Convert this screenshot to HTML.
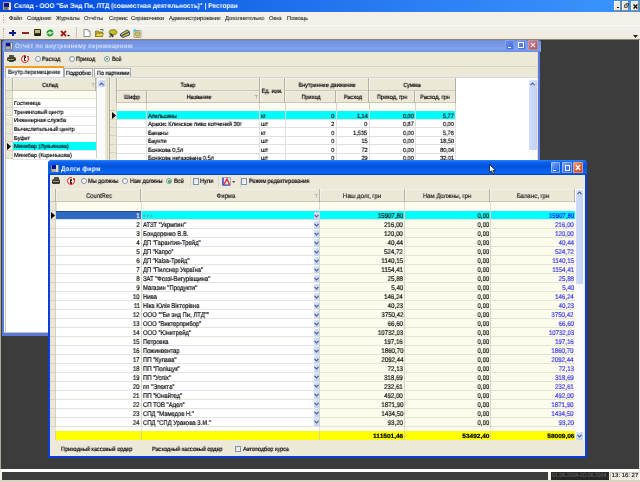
<!DOCTYPE html>
<html><head><meta charset="utf-8"><style>
html,body{margin:0;padding:0;width:640px;height:482px;overflow:hidden;background:#ece9d8}
body{position:relative;font-family:"Liberation Sans",sans-serif}
#w{position:absolute;left:0;top:0;width:640px;height:482px;overflow:hidden}
#w>div{position:absolute}
.t{will-change:transform;text-rendering:geometricPrecision;-webkit-text-stroke:0.18px currentColor}
.t{white-space:nowrap}
</style></head><body><div id="w">
<div style="left:0.00px;top:0.00px;width:640.00px;height:482.00px;background:#ECE9D8"></div>
<div style="left:1.00px;top:39.50px;width:638.00px;height:429.90px;background:#3c3c3c"></div>
<div style="left:0.00px;top:39.50px;width:1.30px;height:442.50px;background:#aca89a"></div>
<div style="left:638.80px;top:39.50px;width:1.20px;height:442.50px;background:#dcdcd8"></div>
<div style="left:0.00px;top:0.00px;width:640.00px;height:12.00px;background:linear-gradient(90deg,#0448dc 0%,#0a58e6 20%,#1a6cea 40%,#2a7ef2 64%,#3890fa 92%,#3a94fc 100%)"></div>
<div style="left:3.00px;top:2.20px;width:8.00px;height:8.20px;background:#b0a890;border-radius:0.5px"></div>
<div style="left:3.80px;top:3.00px;width:4.80px;height:3.80px;background:#0a1090"></div>
<div style="left:8.80px;top:3.00px;width:1.80px;height:7.00px;background:#e8e0c8"></div>
<div style="left:4.20px;top:7.40px;width:4.00px;height:2.60px;background:#807868"></div>
<div style="left:5.60px;top:8.00px;width:1.80px;height:1.20px;background:#2040c0"></div>
<div class="t" style="left:13.50px;top:0.26px;line-height:13.68px;font-size:6.84px;color:#fff;font-weight:bold;-webkit-text-stroke:0;transform:scaleX(0.946);transform-origin:0 50%;">Склад - ООО "Би Энд Пи, ЛТД (совместная деятельность)" | Ресторан</div>
<div style="left:614.00px;top:1.00px;width:7.30px;height:9.80px;background:#ECE9D8;box-shadow:inset -0.8px -0.8px #706c60, inset 0.8px 0.8px #fff"></div>
<div style="left:621.50px;top:1.00px;width:7.90px;height:9.80px;background:#ECE9D8;box-shadow:inset -0.8px -0.8px #706c60, inset 0.8px 0.8px #fff"></div>
<div style="left:631.00px;top:1.00px;width:7.60px;height:9.80px;background:#ECE9D8;box-shadow:inset -0.8px -0.8px #706c60, inset 0.8px 0.8px #fff"></div>
<div style="left:616.80px;top:7.00px;width:2.60px;height:1.40px;background:#181818"></div>
<svg style="position:absolute;left:623.5px;top:3.2px" width="5" height="5" viewBox="0 0 5 5"><path d="M1.8 0.6 L4.4 0.6 L4.4 3 M0.6 1.8 L3.2 1.8 L3.2 4.4 L0.6 4.4Z" fill="none" stroke="#282828" stroke-width="0.8"/></svg>
<svg style="position:absolute;left:632.6px;top:3.6px" width="5" height="5" viewBox="0 0 5 5"><path d="M0.6 0.6 L4.4 4.4 M4.4 0.6 L0.6 4.4" stroke="#101010" stroke-width="1.4"/></svg>
<div style="left:0.00px;top:12.00px;width:640.00px;height:13.00px;background:#f2f0e8"></div>
<div style="left:3.00px;top:15.00px;width:1.00px;height:0.80px;background:#b8b4a4"></div>
<div style="left:3.00px;top:16.80px;width:1.00px;height:0.80px;background:#b8b4a4"></div>
<div style="left:3.00px;top:18.60px;width:1.00px;height:0.80px;background:#b8b4a4"></div>
<div style="left:3.00px;top:20.40px;width:1.00px;height:0.80px;background:#b8b4a4"></div>
<div style="left:3.00px;top:22.20px;width:1.00px;height:0.80px;background:#b8b4a4"></div>
<div class="t" style="left:9.00px;top:14.29px;line-height:11.62px;font-size:5.81px;color:#101010;transform:scaleX(0.938);transform-origin:0 50%;-webkit-text-stroke:0.08px #101010">Файл</div>
<div class="t" style="left:26.50px;top:14.29px;line-height:11.62px;font-size:5.81px;color:#101010;transform:scaleX(0.938);transform-origin:0 50%;-webkit-text-stroke:0.08px #101010">Создание</div>
<div class="t" style="left:55.50px;top:14.29px;line-height:11.62px;font-size:5.81px;color:#101010;transform:scaleX(0.938);transform-origin:0 50%;-webkit-text-stroke:0.08px #101010">Журналы</div>
<div class="t" style="left:84.00px;top:14.29px;line-height:11.62px;font-size:5.81px;color:#101010;transform:scaleX(0.938);transform-origin:0 50%;-webkit-text-stroke:0.08px #101010">Отчёты</div>
<div class="t" style="left:108.60px;top:14.29px;line-height:11.62px;font-size:5.81px;color:#101010;transform:scaleX(0.938);transform-origin:0 50%;-webkit-text-stroke:0.08px #101010">Сервис</div>
<div class="t" style="left:131.00px;top:14.29px;line-height:11.62px;font-size:5.81px;color:#101010;transform:scaleX(0.938);transform-origin:0 50%;-webkit-text-stroke:0.08px #101010">Справочники</div>
<div class="t" style="left:168.70px;top:14.29px;line-height:11.62px;font-size:5.81px;color:#101010;transform:scaleX(0.938);transform-origin:0 50%;-webkit-text-stroke:0.08px #101010">Администрирование</div>
<div class="t" style="left:224.70px;top:14.29px;line-height:11.62px;font-size:5.81px;color:#101010;transform:scaleX(0.938);transform-origin:0 50%;-webkit-text-stroke:0.08px #101010">Дополнительно</div>
<div class="t" style="left:269.40px;top:14.29px;line-height:11.62px;font-size:5.81px;color:#101010;transform:scaleX(0.938);transform-origin:0 50%;-webkit-text-stroke:0.08px #101010">Окна</div>
<div class="t" style="left:286.60px;top:14.29px;line-height:11.62px;font-size:5.81px;color:#101010;transform:scaleX(0.938);transform-origin:0 50%;-webkit-text-stroke:0.08px #101010">Помощь</div>
<div style="left:0.00px;top:25.00px;width:640.00px;height:14.50px;background:linear-gradient(#f4f3ec,#ece9dc)"></div>
<div style="left:0.00px;top:25.00px;width:640.00px;height:0.80px;background:#faf9f4"></div>
<div style="left:3.00px;top:27.50px;width:1.00px;height:0.80px;background:#b8b4a4"></div>
<div style="left:3.00px;top:29.30px;width:1.00px;height:0.80px;background:#b8b4a4"></div>
<div style="left:3.00px;top:31.10px;width:1.00px;height:0.80px;background:#b8b4a4"></div>
<div style="left:3.00px;top:32.90px;width:1.00px;height:0.80px;background:#b8b4a4"></div>
<div style="left:3.00px;top:34.70px;width:1.00px;height:0.80px;background:#b8b4a4"></div>
<div style="left:3.00px;top:36.50px;width:1.00px;height:0.80px;background:#b8b4a4"></div>
<div style="left:76.00px;top:27.00px;width:0.80px;height:11.00px;background:#c8c4b4"></div>
<div style="left:0.00px;top:38.90px;width:640.00px;height:0.90px;background:#8a8470"></div>
<div style="left:9.40px;top:32.10px;width:6.40px;height:2.20px;background:#101c88"></div>
<div style="left:11.50px;top:29.90px;width:2.20px;height:6.50px;background:#101c88"></div>
<div style="left:21.70px;top:32.00px;width:7.00px;height:2.20px;background:#982020"></div>
<div style="left:34.00px;top:29.40px;width:7.00px;height:7.00px;background:#3a3a14;border-radius:0.8px"></div>
<div style="left:35.40px;top:29.80px;width:4.20px;height:2.80px;background:#b8b888"></div>
<div style="left:35.20px;top:33.60px;width:4.60px;height:2.60px;background:#202008"></div>
<div style="left:40.20px;top:30.60px;width:0.80px;height:4.80px;background:#202008"></div>
<svg style="position:absolute;left:46.4px;top:29.2px" width="8" height="8" viewBox="0 0 8 8"><path d="M1.2 3.8 A2.8 2.8 0 0 1 6.2 2.6" stroke="#18a028" stroke-width="1.7" fill="none"/><path d="M6.8 4.2 A2.8 2.8 0 0 1 1.8 5.4" stroke="#18a028" stroke-width="1.7" fill="none"/><path d="M5 0.6 L7.8 3.2 L4.4 3.6Z" fill="#18a028"/><path d="M3 7.4 L0.2 4.8 L3.6 4.4Z" fill="#18a028"/></svg>
<svg style="position:absolute;left:59.6px;top:29.8px" width="7" height="7" viewBox="0 0 7 7"><path d="M1 1 L6 6 M6 1 L1 6" stroke="#a81c1c" stroke-width="1.8"/></svg>
<svg style="position:absolute;left:67.3px;top:35.1px" width="3" height="2"><path d="M0 0 L3 0 L1.5 1.6Z" fill="#101010"/></svg>
<svg style="position:absolute;left:83px;top:28.8px" width="8" height="8" viewBox="0 0 8 8"><path d="M1 0.5 L5 0.5 L7 2.5 L7 7.5 L1 7.5Z" fill="#fff" stroke="#707070" stroke-width="0.8"/><path d="M5 0.5 L5 2.5 L7 2.5" fill="none" stroke="#909090" stroke-width="0.6"/></svg>
<svg style="position:absolute;left:95px;top:29px" width="9" height="8" viewBox="0 0 9 8"><path d="M0.5 2 L3 2 L4 3 L7.5 3 L7.5 7.5 L0.5 7.5Z" fill="#c8a828" stroke="#6a5a10" stroke-width="0.6"/><path d="M1.6 4.2 L8.6 4.2 L7.4 7.5 L0.5 7.5Z" fill="#e8d050" stroke="#6a5a10" stroke-width="0.5"/><path d="M5 0.5 L8 0.5 L8 2.2" fill="none" stroke="#2a6a20" stroke-width="0.8"/></svg>
<svg style="position:absolute;left:107.5px;top:28.8px" width="10" height="9" viewBox="0 0 10 9"><ellipse cx="5" cy="3.2" rx="4" ry="2.6" fill="#c8c020" stroke="#5a5a10" stroke-width="0.6"/><path d="M1.5 5.5 L4.5 8.5 L6 7 L3 4Z" fill="#404048"/><circle cx="2" cy="7.5" r="1.2" fill="#9090a0"/></svg>
<svg style="position:absolute;left:119.5px;top:29px" width="10" height="9" viewBox="0 0 10 9"><path d="M0.5 5 L7 1 L9.5 2.5 L9.5 6 L3 8.5 L0.5 7Z" fill="#c8b828" stroke="#203090" stroke-width="0.8"/><path d="M1 7 L9 3" stroke="#2030a0" stroke-width="1"/></svg>
<svg style="position:absolute;left:132.5px;top:28.5px" width="9" height="9" viewBox="0 0 9 9"><rect x="1" y="1.5" width="7" height="7" rx="1" fill="#f0ecc0" stroke="#808070" stroke-width="0.7"/><circle cx="4.5" cy="5" r="2.4" fill="#c8c060" stroke="#707040" stroke-width="0.5"/><circle cx="1.8" cy="1.6" r="1.4" fill="#30c8e8"/></svg>
<svg style="position:absolute;left:632.5px;top:35px" width="5" height="3"><path d="M0 0 L5 0 L2.5 3Z" fill="#202020"/></svg>
<div style="left:2.20px;top:40.00px;width:538.30px;height:295.80px;background:#5c78dc;border-radius:3px 3px 0 0"></div>
<div style="left:2.50px;top:40.00px;width:538.00px;height:12.00px;background:linear-gradient(#6a84d4 0%,#7692e2 12%,#7898e4 50%,#7ea6ee 72%,#7a9ce8 85%,#6e8ed8 97%);border-radius:3px 3px 0 0"></div>
<div style="left:4.20px;top:52.00px;width:533.60px;height:281.30px;background:#ECE9D8"></div>
<div style="left:5.40px;top:42.20px;width:7.40px;height:7.40px;background:#7a8090;border-radius:0.5px"></div>
<div style="left:6.00px;top:42.80px;width:4.40px;height:3.60px;background:#0a1090"></div>
<div style="left:10.60px;top:42.80px;width:1.80px;height:6.40px;background:#d8d8d0"></div>
<div style="left:6.20px;top:46.80px;width:4.00px;height:2.40px;background:#b0b0a8"></div>
<div class="t" style="left:15.00px;top:39.94px;line-height:13.32px;font-size:6.66px;color:#d4e0fa;font-weight:bold;-webkit-text-stroke:0;transform:scaleX(0.889);transform-origin:0 50%;letter-spacing:0.3px">Отчёт по внутреннему перемещению</div>
<div style="left:504.80px;top:40.30px;width:9.20px;height:9.50px;background:linear-gradient(135deg,#7094ec,#3c66dc);box-shadow:0 0 0 0.6px rgba(200,214,245,0.6) inset;border-radius:1.5px"></div>
<div style="left:516.50px;top:40.30px;width:9.40px;height:9.50px;background:linear-gradient(135deg,#7094ec,#3c66dc);box-shadow:0 0 0 0.6px rgba(200,214,245,0.6) inset;border-radius:1.5px"></div>
<div style="left:528.20px;top:40.30px;width:9.60px;height:9.50px;background:linear-gradient(135deg,#c88090,#a85464);box-shadow:0 0 0 0.6px rgba(200,210,240,0.6) inset;border-radius:1.5px"></div>
<svg style="position:absolute;left:529.6px;top:42.2px" width="6" height="6" viewBox="0 0 6 6"><path d="M0.8 0.8 L5.2 5.2 M5.2 0.8 L0.8 5.2" stroke="#f0e4e8" stroke-width="1.2"/></svg>
<div style="left:507.50px;top:46.50px;width:3.00px;height:1.30px;background:#fff"></div>
<div style="left:518.30px;top:42.30px;width:5.30px;height:5.70px;border:0.8px solid #fff;border-top-width:1.5px;box-sizing:border-box"></div>
<div style="left:8.80px;top:54.50px;width:5.00px;height:2.60px;background:#b8b8b0;border:0.6px solid #505048;box-sizing:border-box;border-radius:0.6px"></div>
<div style="left:7.00px;top:56.70px;width:8.50px;height:4.80px;background:linear-gradient(#484840,#2a2a24);border-radius:1.6px"></div>
<div style="left:8.40px;top:58.50px;width:5.70px;height:1.20px;background:#a0a060"></div>
<div style="left:8.80px;top:60.90px;width:5.00px;height:1.20px;background:#404038;border-radius:0 0 1px 1px"></div>
<div style="left:21.00px;top:54.50px;width:8.20px;height:8.20px;border-radius:50%;border:1.6px solid #f01818;box-sizing:border-box;background:#f4f4ee"></div>
<div style="left:26.40px;top:54.30px;width:3.00px;height:3.00px;background:#ece9d8"></div>
<div style="left:27.20px;top:55.70px;width:1.60px;height:1.60px;background:#f01818;border-radius:0.4px"></div>
<div style="left:24.20px;top:56.10px;width:1.60px;height:5.20px;background:#202020;border-radius:0.8px"></div>
<div style="left:24.50px;top:58.30px;width:1.00px;height:1.40px;background:#e8e8e8"></div>
<div style="left:35.00px;top:56.00px;width:6.20px;height:6.20px;border-radius:50%;background:radial-gradient(circle at 65% 65%,#fff 35%,#d8d8d0 100%);border:0.9px solid #7d93b8;box-sizing:border-box"></div>
<div class="t" style="left:42.00px;top:54.03px;line-height:12.54px;font-size:6.27px;color:#000;transform:scaleX(0.884);transform-origin:0 50%;">Расход</div>
<div style="left:68.50px;top:56.00px;width:6.20px;height:6.20px;border-radius:50%;background:radial-gradient(circle at 65% 65%,#fff 35%,#d8d8d0 100%);border:0.9px solid #7d93b8;box-sizing:border-box"></div>
<div class="t" style="left:75.50px;top:54.03px;line-height:12.54px;font-size:6.27px;color:#000;transform:scaleX(0.884);transform-origin:0 50%;">Приход</div>
<div style="left:104.00px;top:56.00px;width:6.20px;height:6.20px;border-radius:50%;background:radial-gradient(circle at 65% 65%,#fff 35%,#d8d8d0 100%);border:0.9px solid #7d93b8;box-sizing:border-box"></div>
<div style="left:105.90px;top:57.90px;width:2.40px;height:2.40px;border-radius:50%;background:#3cb03c"></div>
<div class="t" style="left:111.50px;top:54.03px;line-height:12.54px;font-size:6.27px;color:#000;transform:scaleX(0.884);transform-origin:0 50%;">Всё</div>
<div style="left:4.50px;top:66.30px;width:533.00px;height:0.80px;background:#d8d4c4"></div>
<div style="left:4.50px;top:67.00px;width:533.00px;height:10.50px;background:#ECE9D8"></div>
<div style="left:4.50px;top:77.00px;width:533.00px;height:0.80px;background:#c0c8d8"></div>
<div style="left:5.00px;top:66.20px;width:58.50px;height:11.80px;background:#fcfcfe;border:0.6px solid #a8b0b4;border-bottom:none;box-sizing:border-box"></div>
<div style="left:5.00px;top:66.20px;width:58.50px;height:1.40px;background:#f0a020;border-radius:1px 1px 0 0"></div>
<div class="t" style="left:8.00px;top:67.13px;line-height:12.14px;font-size:6.07px;color:#282828;transform:scaleX(0.908);transform-origin:0 50%;">Внутр.перемещение</div>
<div style="left:64.00px;top:68.00px;width:28.50px;height:9.00px;background:linear-gradient(#fefefe,#f4f3ee 70%,#eae8e0);border:0.6px solid #a8b0b4;border-bottom:none;box-sizing:border-box"></div>
<div class="t" style="left:66.00px;top:67.86px;line-height:12.28px;font-size:6.14px;color:#000;transform:scaleX(0.876);transform-origin:0 50%;">Подробно</div>
<div style="left:93.50px;top:68.00px;width:37.50px;height:9.00px;background:linear-gradient(#fefefe,#f4f3ee 70%,#eae8e0);border:0.6px solid #a8b0b4;border-bottom:none;box-sizing:border-box"></div>
<div class="t" style="left:96.50px;top:67.86px;line-height:12.28px;font-size:6.14px;color:#000;transform:scaleX(0.882);transform-origin:0 50%;">По партиями</div>
<div style="left:4.20px;top:77.50px;width:533.30px;height:255.80px;background:#fff"></div>
<div style="left:4.50px;top:77.20px;width:533.00px;height:1.00px;background:#d4d8e4"></div>
<div style="left:536.60px;top:52.00px;width:1.40px;height:281.20px;background:#e4e0d0"></div>
<div style="left:4.20px;top:331.80px;width:533.30px;height:1.50px;background:#c4c4bc"></div>
<div style="left:5.00px;top:78.00px;width:1.30px;height:255.30px;background:#c4c4bc"></div>
<div style="left:6.00px;top:78.00px;width:6.50px;height:254.00px;background:#fff"></div>
<div style="left:6.00px;top:78.00px;width:6.50px;height:12.50px;background:#ebe8d8;box-shadow:inset -0.8px 0 #aaa69a, inset 0 -0.8px #c0bcb0, inset 0.6px 0.6px #f8f6ee"></div>
<div style="left:12.50px;top:78.00px;width:83.90px;height:12.50px;background:#ebe8d8;box-shadow:inset -0.8px 0 #aaa69a, inset 0 -0.8px #c0bcb0, inset 0.6px 0.6px #f8f6ee"></div>
<div class="t" style="left:-149.70px;width:400px;text-align:center;top:79.73px;line-height:12.14px;font-size:6.07px;color:#000;transform:scaleX(0.913);transform-origin:50% 50%;">Склад</div>
<svg style="position:absolute;left:90.80px;top:83.10px" width="4" height="4"><path d="M0.3 0.4 L3.7 0.4 M2.4 0.4 L2.4 3.6" fill="none" stroke="#9c9a90" stroke-width="0.6"/></svg>
<div style="left:6.00px;top:90.50px;width:6.50px;height:8.80px;background:#ebe8d8;box-shadow:inset -0.6px -0.6px #c5c2b2"></div>
<div style="left:12.50px;top:90.50px;width:83.90px;height:8.80px;background:#fdfcf2;box-shadow:inset 0 -0.6px #d8d4c4"></div>
<div style="left:6.00px;top:99.30px;width:6.50px;height:8.60px;background:#ebe8d8;box-shadow:inset -0.6px -0.6px #c5c2b2"></div>
<div style="left:12.50px;top:107.30px;width:83.90px;height:0.60px;background:#e4e4e4"></div>
<div class="t" style="left:13.50px;top:99.29px;line-height:11.62px;font-size:5.81px;color:#000;transform:scaleX(0.949);transform-origin:0 50%;">Гостиница</div>
<div style="left:6.00px;top:107.90px;width:6.50px;height:8.60px;background:#ebe8d8;box-shadow:inset -0.6px -0.6px #c5c2b2"></div>
<div style="left:12.50px;top:115.90px;width:83.90px;height:0.60px;background:#e4e4e4"></div>
<div class="t" style="left:13.50px;top:107.89px;line-height:11.62px;font-size:5.81px;color:#000;transform:scaleX(0.949);transform-origin:0 50%;">Тренинговый центр</div>
<div style="left:6.00px;top:116.50px;width:6.50px;height:8.60px;background:#ebe8d8;box-shadow:inset -0.6px -0.6px #c5c2b2"></div>
<div style="left:12.50px;top:124.50px;width:83.90px;height:0.60px;background:#e4e4e4"></div>
<div class="t" style="left:13.50px;top:116.49px;line-height:11.62px;font-size:5.81px;color:#000;transform:scaleX(0.949);transform-origin:0 50%;">Инженерная служба</div>
<div style="left:6.00px;top:125.10px;width:6.50px;height:8.60px;background:#ebe8d8;box-shadow:inset -0.6px -0.6px #c5c2b2"></div>
<div style="left:12.50px;top:133.10px;width:83.90px;height:0.60px;background:#e4e4e4"></div>
<div class="t" style="left:13.50px;top:125.09px;line-height:11.62px;font-size:5.81px;color:#000;transform:scaleX(0.949);transform-origin:0 50%;">Вычислительный центр</div>
<div style="left:6.00px;top:133.70px;width:6.50px;height:8.60px;background:#ebe8d8;box-shadow:inset -0.6px -0.6px #c5c2b2"></div>
<div style="left:12.50px;top:141.70px;width:83.90px;height:0.60px;background:#e4e4e4"></div>
<div class="t" style="left:13.50px;top:133.69px;line-height:11.62px;font-size:5.81px;color:#000;transform:scaleX(0.949);transform-origin:0 50%;">Буфет</div>
<div style="left:6.00px;top:142.30px;width:6.50px;height:8.60px;background:#ebe8d8;box-shadow:inset -0.6px -0.6px #c5c2b2"></div>
<div style="left:12.50px;top:142.30px;width:83.90px;height:8.60px;background:#00ffff"></div>
<svg style="position:absolute;left:7.30px;top:143.10px" width="4" height="7"><path d="M0 0 L4 3.5 L0 7Z" fill="#000"/></svg>
<div style="left:12.50px;top:150.30px;width:83.90px;height:0.60px;background:#e4e4e4"></div>
<div class="t" style="left:13.50px;top:142.29px;line-height:11.62px;font-size:5.81px;color:#000;transform:scaleX(0.949);transform-origin:0 50%;">Минибар (Лукьянова)</div>
<div style="left:6.00px;top:150.90px;width:6.50px;height:8.60px;background:#ebe8d8;box-shadow:inset -0.6px -0.6px #c5c2b2"></div>
<div style="left:12.50px;top:158.90px;width:83.90px;height:0.60px;background:#e4e4e4"></div>
<div class="t" style="left:13.50px;top:150.89px;line-height:11.62px;font-size:5.81px;color:#000;transform:scaleX(0.949);transform-origin:0 50%;">Минибар (Кореньковa)</div>
<div style="left:96.40px;top:78.00px;width:0.60px;height:80.00px;background:#d0d0d0"></div>
<div style="left:97.20px;top:78.00px;width:7.80px;height:254.00px;background:#fbfbf8"></div>
<div style="left:97.60px;top:79.80px;width:7.20px;height:7.40px;background:linear-gradient(135deg,#dde6fd,#b9cdf8);border-radius:1px"></div>
<svg style="position:absolute;left:98.70px;top:81.70px" width="5" height="4"><path d="M0.5 3.2 L2.5 1.2 L4.5 3.2" stroke="#4d6185" stroke-width="1.2" fill="none"/></svg>
<div style="left:105.00px;top:78.00px;width:4.40px;height:254.00px;background:#ECE9D8"></div>
<div style="left:107.00px;top:78.00px;width:0.60px;height:254.00px;background:#d8d4c4"></div>
<div style="left:109.20px;top:78.00px;width:0.80px;height:254.00px;background:#b0ac9c"></div>
<div style="left:110.00px;top:78.00px;width:6.50px;height:33.20px;background:#ebe8d8;box-shadow:inset -0.8px 0 #aaa69a, inset 0 -0.8px #c0bcb0, inset 0.6px 0.6px #f8f6ee"></div>
<div style="left:116.50px;top:78.00px;width:143.20px;height:12.50px;background:#ebe8d8;box-shadow:inset -0.8px 0 #aaa69a, inset 0 -0.8px #c0bcb0, inset 0.6px 0.6px #f8f6ee"></div>
<div class="t" style="left:-12.00px;width:400px;text-align:center;top:80.03px;line-height:12.14px;font-size:6.07px;color:#000;transform:scaleX(0.913);transform-origin:50% 50%;">Товар</div>
<div style="left:259.70px;top:78.00px;width:25.30px;height:24.50px;background:#ebe8d8;box-shadow:inset -0.8px 0 #aaa69a, inset 0 -0.8px #c0bcb0, inset 0.6px 0.6px #f8f6ee"></div>
<div class="t" style="left:72.30px;width:400px;text-align:center;top:85.93px;line-height:12.14px;font-size:6.07px;color:#000;transform:scaleX(0.913);transform-origin:50% 50%;">Ед. изм.</div>
<div style="left:285.00px;top:78.00px;width:84.00px;height:12.50px;background:#ebe8d8;box-shadow:inset -0.8px 0 #aaa69a, inset 0 -0.8px #c0bcb0, inset 0.6px 0.6px #f8f6ee"></div>
<div class="t" style="left:127.00px;width:400px;text-align:center;top:80.03px;line-height:12.14px;font-size:6.07px;color:#000;transform:scaleX(0.913);transform-origin:50% 50%;">Внутреннее движение</div>
<div style="left:369.00px;top:78.00px;width:86.60px;height:12.50px;background:#ebe8d8;box-shadow:inset -0.8px 0 #aaa69a, inset 0 -0.8px #c0bcb0, inset 0.6px 0.6px #f8f6ee"></div>
<div class="t" style="left:212.30px;width:400px;text-align:center;top:80.03px;line-height:12.14px;font-size:6.07px;color:#000;transform:scaleX(0.913);transform-origin:50% 50%;">Сумма</div>
<div style="left:116.50px;top:90.50px;width:30.00px;height:12.00px;background:#ebe8d8;box-shadow:inset -0.8px 0 #aaa69a, inset 0 -0.8px #c0bcb0, inset 0.6px 0.6px #f8f6ee"></div>
<div class="t" style="left:-68.50px;width:400px;text-align:center;top:92.03px;line-height:12.14px;font-size:6.07px;color:#000;transform:scaleX(0.913);transform-origin:50% 50%;">Шифр</div>
<div style="left:146.50px;top:90.50px;width:113.20px;height:12.00px;background:#ebe8d8;box-shadow:inset -0.8px 0 #aaa69a, inset 0 -0.8px #c0bcb0, inset 0.6px 0.6px #f8f6ee"></div>
<div class="t" style="left:-1.40px;width:400px;text-align:center;top:92.03px;line-height:12.14px;font-size:6.07px;color:#000;transform:scaleX(0.913);transform-origin:50% 50%;">Название</div>
<div style="left:285.00px;top:90.50px;width:51.00px;height:12.00px;background:#ebe8d8;box-shadow:inset -0.8px 0 #aaa69a, inset 0 -0.8px #c0bcb0, inset 0.6px 0.6px #f8f6ee"></div>
<div class="t" style="left:110.50px;width:400px;text-align:center;top:92.03px;line-height:12.14px;font-size:6.07px;color:#000;transform:scaleX(0.913);transform-origin:50% 50%;">Приход</div>
<div style="left:336.00px;top:90.50px;width:33.00px;height:12.00px;background:#ebe8d8;box-shadow:inset -0.8px 0 #aaa69a, inset 0 -0.8px #c0bcb0, inset 0.6px 0.6px #f8f6ee"></div>
<div class="t" style="left:152.50px;width:400px;text-align:center;top:92.03px;line-height:12.14px;font-size:6.07px;color:#000;transform:scaleX(0.913);transform-origin:50% 50%;">Расход</div>
<div style="left:369.00px;top:90.50px;width:46.00px;height:12.00px;background:#ebe8d8;box-shadow:inset -0.8px 0 #aaa69a, inset 0 -0.8px #c0bcb0, inset 0.6px 0.6px #f8f6ee"></div>
<div class="t" style="left:192.00px;width:400px;text-align:center;top:92.03px;line-height:12.14px;font-size:6.07px;color:#000;transform:scaleX(0.913);transform-origin:50% 50%;">Приход, грн</div>
<div style="left:415.00px;top:90.50px;width:40.60px;height:12.00px;background:#ebe8d8;box-shadow:inset -0.8px 0 #aaa69a, inset 0 -0.8px #c0bcb0, inset 0.6px 0.6px #f8f6ee"></div>
<div class="t" style="left:235.30px;width:400px;text-align:center;top:92.03px;line-height:12.14px;font-size:6.07px;color:#000;transform:scaleX(0.913);transform-origin:50% 50%;">Расход, грн</div>
<svg style="position:absolute;left:253.80px;top:95.30px" width="4" height="4"><path d="M0.3 0.4 L3.7 0.4 M2.4 0.4 L2.4 3.6" fill="none" stroke="#9c9a90" stroke-width="0.6"/></svg>
<div style="left:116.50px;top:102.50px;width:339.10px;height:8.70px;background:#fdfcf2"></div>
<div style="left:116.20px;top:102.50px;width:0.60px;height:8.70px;background:#d8d4c4"></div>
<div style="left:146.20px;top:102.50px;width:0.60px;height:8.70px;background:#d8d4c4"></div>
<div style="left:259.40px;top:102.50px;width:0.60px;height:8.70px;background:#d8d4c4"></div>
<div style="left:284.70px;top:102.50px;width:0.60px;height:8.70px;background:#d8d4c4"></div>
<div style="left:335.70px;top:102.50px;width:0.60px;height:8.70px;background:#d8d4c4"></div>
<div style="left:368.70px;top:102.50px;width:0.60px;height:8.70px;background:#d8d4c4"></div>
<div style="left:414.70px;top:102.50px;width:0.60px;height:8.70px;background:#d8d4c4"></div>
<div style="left:455.30px;top:102.50px;width:0.60px;height:8.70px;background:#d8d4c4"></div>
<div style="left:116.50px;top:110.60px;width:339.10px;height:0.60px;background:#d8d4c4"></div>
<div style="left:110.00px;top:111.20px;width:6.50px;height:8.42px;background:#ebe8d8;box-shadow:inset -0.6px -0.6px #c5c2b2"></div>
<div style="left:116.50px;top:111.20px;width:339.10px;height:8.42px;background:#00ffff"></div>
<svg style="position:absolute;left:111.50px;top:111.91px" width="4" height="7"><path d="M0 0 L4 3.5 L0 7Z" fill="#000"/></svg>
<div style="left:116.50px;top:119.02px;width:339.10px;height:0.60px;background:#e0e0e0"></div>
<div style="left:146.20px;top:111.20px;width:0.60px;height:8.42px;background:#e0e0e0"></div>
<div style="left:259.40px;top:111.20px;width:0.60px;height:8.42px;background:#e0e0e0"></div>
<div style="left:284.70px;top:111.20px;width:0.60px;height:8.42px;background:#e0e0e0"></div>
<div style="left:335.70px;top:111.20px;width:0.60px;height:8.42px;background:#e0e0e0"></div>
<div style="left:368.70px;top:111.20px;width:0.60px;height:8.42px;background:#e0e0e0"></div>
<div style="left:414.70px;top:111.20px;width:0.60px;height:8.42px;background:#e0e0e0"></div>
<div style="left:455.30px;top:111.20px;width:0.60px;height:8.42px;background:#e0e0e0"></div>
<div class="t" style="left:147.50px;top:110.94px;line-height:12.14px;font-size:6.07px;color:#000;transform:scaleX(0.924);transform-origin:0 50%;">Апельсины</div>
<div class="t" style="left:261.00px;top:110.94px;line-height:12.14px;font-size:6.07px;color:#000;transform:scaleX(0.924);transform-origin:0 50%;">кг</div>
<div class="t" style="right:305.50px;top:110.94px;line-height:12.14px;font-size:6.07px;color:#000;transform:scaleX(0.924);transform-origin:100% 50%;">0</div>
<div class="t" style="right:272.50px;top:110.94px;line-height:12.14px;font-size:6.07px;color:#000;transform:scaleX(0.924);transform-origin:100% 50%;">1,14</div>
<div class="t" style="right:226.50px;top:110.94px;line-height:12.14px;font-size:6.07px;color:#000;transform:scaleX(0.924);transform-origin:100% 50%;">0,00</div>
<div class="t" style="right:186.00px;top:110.94px;line-height:12.14px;font-size:6.07px;color:#000;transform:scaleX(0.924);transform-origin:100% 50%;">5,77</div>
<div style="left:110.00px;top:119.62px;width:6.50px;height:8.42px;background:#ebe8d8;box-shadow:inset -0.6px -0.6px #c5c2b2"></div>
<div style="left:116.50px;top:127.44px;width:339.10px;height:0.60px;background:#e0e0e0"></div>
<div style="left:146.20px;top:119.62px;width:0.60px;height:8.42px;background:#e0e0e0"></div>
<div style="left:259.40px;top:119.62px;width:0.60px;height:8.42px;background:#e0e0e0"></div>
<div style="left:284.70px;top:119.62px;width:0.60px;height:8.42px;background:#e0e0e0"></div>
<div style="left:335.70px;top:119.62px;width:0.60px;height:8.42px;background:#e0e0e0"></div>
<div style="left:368.70px;top:119.62px;width:0.60px;height:8.42px;background:#e0e0e0"></div>
<div style="left:414.70px;top:119.62px;width:0.60px;height:8.42px;background:#e0e0e0"></div>
<div style="left:455.30px;top:119.62px;width:0.60px;height:8.42px;background:#e0e0e0"></div>
<div class="t" style="left:147.50px;top:119.36px;line-height:12.14px;font-size:6.07px;color:#000;transform:scaleX(0.924);transform-origin:0 50%;">Арахис Клинское пиво копчений 30г</div>
<div class="t" style="left:261.00px;top:119.36px;line-height:12.14px;font-size:6.07px;color:#000;transform:scaleX(0.924);transform-origin:0 50%;">шт</div>
<div class="t" style="right:305.50px;top:119.36px;line-height:12.14px;font-size:6.07px;color:#000;transform:scaleX(0.924);transform-origin:100% 50%;">2</div>
<div class="t" style="right:272.50px;top:119.36px;line-height:12.14px;font-size:6.07px;color:#000;transform:scaleX(0.924);transform-origin:100% 50%;">0</div>
<div class="t" style="right:226.50px;top:119.36px;line-height:12.14px;font-size:6.07px;color:#000;transform:scaleX(0.924);transform-origin:100% 50%;">0,87</div>
<div class="t" style="right:186.00px;top:119.36px;line-height:12.14px;font-size:6.07px;color:#000;transform:scaleX(0.924);transform-origin:100% 50%;">0,00</div>
<div style="left:110.00px;top:128.04px;width:6.50px;height:8.42px;background:#ebe8d8;box-shadow:inset -0.6px -0.6px #c5c2b2"></div>
<div style="left:116.50px;top:135.86px;width:339.10px;height:0.60px;background:#e0e0e0"></div>
<div style="left:146.20px;top:128.04px;width:0.60px;height:8.42px;background:#e0e0e0"></div>
<div style="left:259.40px;top:128.04px;width:0.60px;height:8.42px;background:#e0e0e0"></div>
<div style="left:284.70px;top:128.04px;width:0.60px;height:8.42px;background:#e0e0e0"></div>
<div style="left:335.70px;top:128.04px;width:0.60px;height:8.42px;background:#e0e0e0"></div>
<div style="left:368.70px;top:128.04px;width:0.60px;height:8.42px;background:#e0e0e0"></div>
<div style="left:414.70px;top:128.04px;width:0.60px;height:8.42px;background:#e0e0e0"></div>
<div style="left:455.30px;top:128.04px;width:0.60px;height:8.42px;background:#e0e0e0"></div>
<div class="t" style="left:147.50px;top:127.78px;line-height:12.14px;font-size:6.07px;color:#000;transform:scaleX(0.924);transform-origin:0 50%;">Бананы</div>
<div class="t" style="left:261.00px;top:127.78px;line-height:12.14px;font-size:6.07px;color:#000;transform:scaleX(0.924);transform-origin:0 50%;">кг</div>
<div class="t" style="right:305.50px;top:127.78px;line-height:12.14px;font-size:6.07px;color:#000;transform:scaleX(0.924);transform-origin:100% 50%;">0</div>
<div class="t" style="right:272.50px;top:127.78px;line-height:12.14px;font-size:6.07px;color:#000;transform:scaleX(0.924);transform-origin:100% 50%;">1,535</div>
<div class="t" style="right:226.50px;top:127.78px;line-height:12.14px;font-size:6.07px;color:#000;transform:scaleX(0.924);transform-origin:100% 50%;">0,00</div>
<div class="t" style="right:186.00px;top:127.78px;line-height:12.14px;font-size:6.07px;color:#000;transform:scaleX(0.924);transform-origin:100% 50%;">5,76</div>
<div style="left:110.00px;top:136.46px;width:6.50px;height:8.42px;background:#ebe8d8;box-shadow:inset -0.6px -0.6px #c5c2b2"></div>
<div style="left:116.50px;top:144.28px;width:339.10px;height:0.60px;background:#e0e0e0"></div>
<div style="left:146.20px;top:136.46px;width:0.60px;height:8.42px;background:#e0e0e0"></div>
<div style="left:259.40px;top:136.46px;width:0.60px;height:8.42px;background:#e0e0e0"></div>
<div style="left:284.70px;top:136.46px;width:0.60px;height:8.42px;background:#e0e0e0"></div>
<div style="left:335.70px;top:136.46px;width:0.60px;height:8.42px;background:#e0e0e0"></div>
<div style="left:368.70px;top:136.46px;width:0.60px;height:8.42px;background:#e0e0e0"></div>
<div style="left:414.70px;top:136.46px;width:0.60px;height:8.42px;background:#e0e0e0"></div>
<div style="left:455.30px;top:136.46px;width:0.60px;height:8.42px;background:#e0e0e0"></div>
<div class="t" style="left:147.50px;top:136.20px;line-height:12.14px;font-size:6.07px;color:#000;transform:scaleX(0.924);transform-origin:0 50%;">Баунти</div>
<div class="t" style="left:261.00px;top:136.20px;line-height:12.14px;font-size:6.07px;color:#000;transform:scaleX(0.924);transform-origin:0 50%;">шт</div>
<div class="t" style="right:305.50px;top:136.20px;line-height:12.14px;font-size:6.07px;color:#000;transform:scaleX(0.924);transform-origin:100% 50%;">0</div>
<div class="t" style="right:272.50px;top:136.20px;line-height:12.14px;font-size:6.07px;color:#000;transform:scaleX(0.924);transform-origin:100% 50%;">15</div>
<div class="t" style="right:226.50px;top:136.20px;line-height:12.14px;font-size:6.07px;color:#000;transform:scaleX(0.924);transform-origin:100% 50%;">0,00</div>
<div class="t" style="right:186.00px;top:136.20px;line-height:12.14px;font-size:6.07px;color:#000;transform:scaleX(0.924);transform-origin:100% 50%;">18,50</div>
<div style="left:110.00px;top:144.88px;width:6.50px;height:8.42px;background:#ebe8d8;box-shadow:inset -0.6px -0.6px #c5c2b2"></div>
<div style="left:116.50px;top:152.70px;width:339.10px;height:0.60px;background:#e0e0e0"></div>
<div style="left:146.20px;top:144.88px;width:0.60px;height:8.42px;background:#e0e0e0"></div>
<div style="left:259.40px;top:144.88px;width:0.60px;height:8.42px;background:#e0e0e0"></div>
<div style="left:284.70px;top:144.88px;width:0.60px;height:8.42px;background:#e0e0e0"></div>
<div style="left:335.70px;top:144.88px;width:0.60px;height:8.42px;background:#e0e0e0"></div>
<div style="left:368.70px;top:144.88px;width:0.60px;height:8.42px;background:#e0e0e0"></div>
<div style="left:414.70px;top:144.88px;width:0.60px;height:8.42px;background:#e0e0e0"></div>
<div style="left:455.30px;top:144.88px;width:0.60px;height:8.42px;background:#e0e0e0"></div>
<div class="t" style="left:147.50px;top:144.62px;line-height:12.14px;font-size:6.07px;color:#000;transform:scaleX(0.924);transform-origin:0 50%;">Бонжова 0,5л</div>
<div class="t" style="left:261.00px;top:144.62px;line-height:12.14px;font-size:6.07px;color:#000;transform:scaleX(0.924);transform-origin:0 50%;">шт</div>
<div class="t" style="right:305.50px;top:144.62px;line-height:12.14px;font-size:6.07px;color:#000;transform:scaleX(0.924);transform-origin:100% 50%;">0</div>
<div class="t" style="right:272.50px;top:144.62px;line-height:12.14px;font-size:6.07px;color:#000;transform:scaleX(0.924);transform-origin:100% 50%;">72</div>
<div class="t" style="right:226.50px;top:144.62px;line-height:12.14px;font-size:6.07px;color:#000;transform:scaleX(0.924);transform-origin:100% 50%;">0,00</div>
<div class="t" style="right:186.00px;top:144.62px;line-height:12.14px;font-size:6.07px;color:#000;transform:scaleX(0.924);transform-origin:100% 50%;">80,04</div>
<div style="left:110.00px;top:153.30px;width:6.50px;height:8.42px;background:#ebe8d8;box-shadow:inset -0.6px -0.6px #c5c2b2"></div>
<div style="left:116.50px;top:161.12px;width:339.10px;height:0.60px;background:#e0e0e0"></div>
<div style="left:146.20px;top:153.30px;width:0.60px;height:8.42px;background:#e0e0e0"></div>
<div style="left:259.40px;top:153.30px;width:0.60px;height:8.42px;background:#e0e0e0"></div>
<div style="left:284.70px;top:153.30px;width:0.60px;height:8.42px;background:#e0e0e0"></div>
<div style="left:335.70px;top:153.30px;width:0.60px;height:8.42px;background:#e0e0e0"></div>
<div style="left:368.70px;top:153.30px;width:0.60px;height:8.42px;background:#e0e0e0"></div>
<div style="left:414.70px;top:153.30px;width:0.60px;height:8.42px;background:#e0e0e0"></div>
<div style="left:455.30px;top:153.30px;width:0.60px;height:8.42px;background:#e0e0e0"></div>
<div class="t" style="left:147.50px;top:153.04px;line-height:12.14px;font-size:6.07px;color:#000;transform:scaleX(0.924);transform-origin:0 50%;">Бонжова негазована 0,5л</div>
<div class="t" style="left:261.00px;top:153.04px;line-height:12.14px;font-size:6.07px;color:#000;transform:scaleX(0.924);transform-origin:0 50%;">шт</div>
<div class="t" style="right:305.50px;top:153.04px;line-height:12.14px;font-size:6.07px;color:#000;transform:scaleX(0.924);transform-origin:100% 50%;">0</div>
<div class="t" style="right:272.50px;top:153.04px;line-height:12.14px;font-size:6.07px;color:#000;transform:scaleX(0.924);transform-origin:100% 50%;">29</div>
<div class="t" style="right:226.50px;top:153.04px;line-height:12.14px;font-size:6.07px;color:#000;transform:scaleX(0.924);transform-origin:100% 50%;">0,00</div>
<div class="t" style="right:186.00px;top:153.04px;line-height:12.14px;font-size:6.07px;color:#000;transform:scaleX(0.924);transform-origin:100% 50%;">32,01</div>
<div style="left:529.00px;top:78.00px;width:7.80px;height:254.00px;background:#fbfbf8"></div>
<div style="left:529.20px;top:87.40px;width:7.40px;height:62.20px;background:linear-gradient(90deg,#d0dcf8,#c2d2f6);border-radius:1px"></div>
<div style="left:529.20px;top:80.00px;width:7.40px;height:7.40px;background:linear-gradient(135deg,#dde6fd,#b9cdf8);border-radius:1px"></div>
<svg style="position:absolute;left:530.40px;top:81.90px" width="5" height="4"><path d="M0.5 3.2 L2.5 1.2 L4.5 3.2" stroke="#4d6185" stroke-width="1.2" fill="none"/></svg>
<div style="left:47.50px;top:159.80px;width:539.30px;height:298.50px;background:#0a3ed8;border-radius:4px 4px 0 0"></div>
<div style="left:47.50px;top:159.50px;width:539.30px;height:15.30px;background:linear-gradient(#2c84fa 0%,#0a62ee 15%,#0552da 45%,#0660ee 70%,#0a6af8 86%,#0446cc 95%,#0440c4 100%);border-radius:4px 4px 0 0"></div>
<div style="left:49.80px;top:174.50px;width:534.80px;height:281.50px;background:#ECE9D8"></div>
<div style="left:49.80px;top:174.50px;width:0.80px;height:281.50px;background:#e4e8f4"></div>
<div style="left:51.20px;top:164.60px;width:7.40px;height:7.60px;background:#8a8a80;border-radius:0.5px"></div>
<div style="left:51.80px;top:165.20px;width:4.40px;height:3.60px;background:#0a1090"></div>
<div style="left:56.40px;top:165.20px;width:1.80px;height:6.60px;background:#e0dcc8"></div>
<div style="left:52.00px;top:169.20px;width:4.00px;height:2.60px;background:#b8b4a0"></div>
<div class="t" style="left:60.60px;top:162.56px;line-height:13.68px;font-size:6.84px;color:#fff;font-weight:bold;-webkit-text-stroke:0;transform:scaleX(0.889);transform-origin:0 50%;letter-spacing:0.3px">Долги фирм</div>
<svg style="position:absolute;left:489px;top:163.5px" width="8" height="11" viewBox="0 0 8 11"><path d="M0.5 0.5 L0.5 8.5 L2.5 6.8 L4 10 L5.3 9.4 L3.9 6.3 L6.5 6.3Z" fill="#fff" stroke="#000" stroke-width="0.7"/></svg>
<div style="left:550.70px;top:162.40px;width:9.50px;height:10.60px;background:linear-gradient(135deg,#8ab0f8,#3a78f0 55%,#2a62e0);box-shadow:0 0 0 0.6px rgba(230,236,250,0.75) inset;border-radius:1.5px"></div>
<div style="left:562.00px;top:162.40px;width:9.50px;height:10.60px;background:linear-gradient(135deg,#8ab0f8,#3a78f0 55%,#2a62e0);box-shadow:0 0 0 0.6px rgba(230,236,250,0.75) inset;border-radius:1.5px"></div>
<div style="left:573.40px;top:162.40px;width:10.00px;height:10.60px;background:linear-gradient(135deg,#f49a78,#e05a30 55%,#d04018);box-shadow:0 0 0 0.6px rgba(230,236,250,0.75) inset;border-radius:1.5px"></div>
<svg style="position:absolute;left:575.4px;top:164.3px" width="6" height="7" viewBox="0 0 6 7"><path d="M0.8 1 L5.2 6 M5.2 1 L0.8 6" stroke="#fff" stroke-width="1.3"/></svg>
<div style="left:553.00px;top:169.60px;width:3.40px;height:1.40px;background:#fff"></div>
<div style="left:564.60px;top:164.80px;width:5.00px;height:5.80px;border:0.7px solid #fff;border-top-width:1.5px;box-sizing:border-box"></div>
<div style="left:53.60px;top:176.80px;width:5.00px;height:2.60px;background:#b8b8b0;border:0.6px solid #505048;box-sizing:border-box;border-radius:0.6px"></div>
<div style="left:51.80px;top:179.00px;width:8.50px;height:4.80px;background:linear-gradient(#484840,#2a2a24);border-radius:1.6px"></div>
<div style="left:53.20px;top:180.80px;width:5.70px;height:1.20px;background:#a0a060"></div>
<div style="left:53.60px;top:183.20px;width:5.00px;height:1.20px;background:#404038;border-radius:0 0 1px 1px"></div>
<div style="left:63.50px;top:176.00px;width:0.60px;height:12.00px;background:#e4e1d2"></div>
<div style="left:67.00px;top:177.00px;width:8.20px;height:8.20px;border-radius:50%;border:1.6px solid #f01818;box-sizing:border-box;background:#f4f4ee"></div>
<div style="left:72.40px;top:176.80px;width:3.00px;height:3.00px;background:#ece9d8"></div>
<div style="left:73.20px;top:178.20px;width:1.60px;height:1.60px;background:#f01818;border-radius:0.4px"></div>
<div style="left:70.20px;top:178.60px;width:1.60px;height:5.20px;background:#202020;border-radius:0.8px"></div>
<div style="left:70.50px;top:180.80px;width:1.00px;height:1.40px;background:#e8e8e8"></div>
<div style="left:78.00px;top:176.00px;width:0.60px;height:12.00px;background:#e4e1d2"></div>
<div style="left:81.00px;top:178.30px;width:6.20px;height:6.20px;border-radius:50%;background:radial-gradient(circle at 65% 65%,#fff 35%,#d8d8d0 100%);border:0.9px solid #7d93b8;box-sizing:border-box"></div>
<div class="t" style="left:88.30px;top:176.16px;line-height:12.68px;font-size:6.34px;color:#000;transform:scaleX(0.875);transform-origin:0 50%;">Мы должны</div>
<div style="left:122.00px;top:178.30px;width:6.20px;height:6.20px;border-radius:50%;background:radial-gradient(circle at 65% 65%,#fff 35%,#d8d8d0 100%);border:0.9px solid #7d93b8;box-sizing:border-box"></div>
<div class="t" style="left:129.50px;top:176.16px;line-height:12.68px;font-size:6.34px;color:#000;transform:scaleX(0.875);transform-origin:0 50%;">Нам должны</div>
<div style="left:166.30px;top:178.30px;width:6.20px;height:6.20px;border-radius:50%;background:radial-gradient(circle at 65% 65%,#fff 35%,#d8d8d0 100%);border:0.9px solid #7d93b8;box-sizing:border-box"></div>
<div style="left:168.20px;top:180.20px;width:2.40px;height:2.40px;border-radius:50%;background:#3cb03c"></div>
<div class="t" style="left:173.80px;top:176.16px;line-height:12.68px;font-size:6.34px;color:#000;transform:scaleX(0.896);transform-origin:0 50%;">Всё</div>
<div style="left:190.20px;top:176.00px;width:0.60px;height:12.00px;background:#dcd8c8"></div>
<div style="left:192.60px;top:178.20px;width:6.40px;height:6.40px;background:linear-gradient(135deg,#dcdcd7,#fff);border:0.9px solid #7d93b8;box-sizing:border-box"></div>
<div class="t" style="left:200.30px;top:176.16px;line-height:12.68px;font-size:6.34px;color:#000;transform:scaleX(0.896);transform-origin:0 50%;">Нули</div>
<div style="left:218.00px;top:176.00px;width:0.60px;height:12.00px;background:#dcd8c8"></div>
<svg style="position:absolute;left:221.5px;top:176.8px" width="9" height="9" viewBox="0 0 9 9"><rect x="0.5" y="0.5" width="8" height="8" fill="#e8e8f0" stroke="#8080a0" stroke-width="0.6"/><path d="M1 8 L1 1" stroke="#3040c0" stroke-width="1.4"/><path d="M2 7.5 L5 2 L7.5 7.5" stroke="#e03030" stroke-width="1.5" fill="none"/><path d="M1 8 L8 8" stroke="#3040c0" stroke-width="1"/></svg>
<svg style="position:absolute;left:231.8px;top:180.6px" width="4" height="3"><path d="M0 0 L3.4 0 L1.7 2Z" fill="#505050"/></svg>
<div style="left:239.50px;top:176.00px;width:0.60px;height:12.00px;background:#dcd8c8"></div>
<div style="left:241.00px;top:178.20px;width:6.40px;height:6.40px;background:linear-gradient(135deg,#dcdcd7,#fff);border:0.9px solid #7d93b8;box-sizing:border-box"></div>
<div class="t" style="left:248.80px;top:176.16px;line-height:12.68px;font-size:6.34px;color:#000;transform:scaleX(0.875);transform-origin:0 50%;">Режим редактирования</div>
<div style="left:49.80px;top:188.80px;width:534.80px;height:0.80px;background:#d8d4c4"></div>
<div style="left:50.00px;top:189.40px;width:525.50px;height:250.40px;background:#fff"></div>
<div style="left:50.00px;top:189.40px;width:6.20px;height:12.20px;background:#ebe8d8;box-shadow:inset -0.8px 0 #aaa69a, inset 0 -0.8px #c0bcb0, inset 0.6px 0.6px #f8f6ee"></div>
<div style="left:56.20px;top:189.40px;width:85.00px;height:12.20px;background:#ebe8d8;box-shadow:inset -0.8px 0 #aaa69a, inset 0 -0.8px #c0bcb0, inset 0.6px 0.6px #f8f6ee"></div>
<div class="t" style="left:-101.30px;width:400px;text-align:center;top:190.34px;line-height:13.32px;font-size:6.66px;color:#000;transform:scaleX(0.878);transform-origin:50% 50%;color:#202020">CountRec</div>
<div style="left:141.20px;top:189.40px;width:178.50px;height:12.20px;background:#ebe8d8;box-shadow:inset -0.8px 0 #aaa69a, inset 0 -0.8px #c0bcb0, inset 0.6px 0.6px #f8f6ee"></div>
<div class="t" style="left:26.20px;width:400px;text-align:center;top:190.34px;line-height:13.32px;font-size:6.66px;color:#000;transform:scaleX(0.898);transform-origin:50% 50%;color:#202020">Фирма</div>
<svg style="position:absolute;left:314.10px;top:194.00px" width="4" height="4"><path d="M0.3 0.4 L3.7 0.4 M2.4 0.4 L2.4 3.6" fill="none" stroke="#9c9a90" stroke-width="0.6"/></svg>
<div style="left:319.70px;top:189.40px;width:85.00px;height:12.20px;background:#ebe8d8;box-shadow:inset -0.8px 0 #aaa69a, inset 0 -0.8px #c0bcb0, inset 0.6px 0.6px #f8f6ee"></div>
<div class="t" style="left:162.20px;width:400px;text-align:center;top:191.00px;line-height:12.80px;font-size:6.4px;color:#000;transform:scaleX(0.948);transform-origin:50% 50%;color:#202020">Наш долг, грн</div>
<div style="left:404.70px;top:189.40px;width:85.60px;height:12.20px;background:#ebe8d8;box-shadow:inset -0.8px 0 #aaa69a, inset 0 -0.8px #c0bcb0, inset 0.6px 0.6px #f8f6ee"></div>
<div class="t" style="left:247.40px;width:400px;text-align:center;top:191.00px;line-height:12.80px;font-size:6.4px;color:#000;transform:scaleX(0.948);transform-origin:50% 50%;color:#202020">Нам Должны, грн</div>
<div style="left:490.30px;top:189.40px;width:85.20px;height:12.20px;background:#ebe8d8;box-shadow:inset -0.8px 0 #aaa69a, inset 0 -0.8px #c0bcb0, inset 0.6px 0.6px #f8f6ee"></div>
<div class="t" style="left:332.60px;width:400px;text-align:center;top:191.00px;line-height:12.80px;font-size:6.4px;color:#000;transform:scaleX(0.948);transform-origin:50% 50%;color:#202020">Баланс, грн</div>
<div style="left:50.00px;top:201.60px;width:6.20px;height:9.70px;background:#ebe8d8;box-shadow:inset -0.6px -0.6px #c5c2b2"></div>
<div style="left:56.20px;top:201.60px;width:519.30px;height:9.70px;background:#fdfcf0"></div>
<div style="left:55.90px;top:201.60px;width:0.60px;height:9.70px;background:#e4e0d0"></div>
<div style="left:140.90px;top:201.60px;width:0.60px;height:9.70px;background:#e4e0d0"></div>
<div style="left:319.40px;top:201.60px;width:0.60px;height:9.70px;background:#e4e0d0"></div>
<div style="left:404.40px;top:201.60px;width:0.60px;height:9.70px;background:#e4e0d0"></div>
<div style="left:490.00px;top:201.60px;width:0.60px;height:9.70px;background:#e4e0d0"></div>
<div style="left:56.20px;top:210.70px;width:519.30px;height:0.60px;background:#e4e0d0"></div>
<div style="left:50.00px;top:211.30px;width:6.20px;height:8.97px;background:#ebe8d8;box-shadow:inset -0.6px -0.6px #c5c2b2"></div>
<div style="left:56.20px;top:211.30px;width:85.00px;height:8.97px;background:#316ac5;box-shadow:inset 0 0.8px #243c78, inset 0 -0.8px #243c78"></div>
<div style="left:141.20px;top:211.30px;width:434.30px;height:8.97px;background:#00ffff"></div>
<svg style="position:absolute;left:51.20px;top:212.29px" width="4" height="7"><path d="M0 0 L4 3.5 L0 7Z" fill="#000"/></svg>
<div style="left:56.20px;top:219.37px;width:519.30px;height:0.90px;background:#e6e4da"></div>
<div style="left:140.80px;top:211.30px;width:0.80px;height:8.97px;background:#d8d6cc"></div>
<div style="left:319.30px;top:211.30px;width:0.80px;height:8.97px;background:#d8d6cc"></div>
<div style="left:404.30px;top:211.30px;width:0.80px;height:8.97px;background:#d8d6cc"></div>
<div style="left:489.90px;top:211.30px;width:0.80px;height:8.97px;background:#d8d6cc"></div>
<div style="left:314.00px;top:211.90px;width:5.40px;height:7.77px;background:linear-gradient(135deg,#dde6fd,#b9cdf8);border-radius:1px"></div>
<svg style="position:absolute;left:314.20px;top:213.99px" width="5" height="4"><path d="M0.5 0.8 L2.5 2.8 L4.5 0.8" stroke="#4d6185" stroke-width="1.2" fill="none"/></svg>
<div class="t" style="right:500.00px;top:210.19px;line-height:13.60px;font-size:6.8px;color:#fff;transform:scaleX(0.885);transform-origin:100% 50%;">1</div>
<div class="t" style="left:142.80px;top:210.19px;line-height:13.60px;font-size:6.8px;color:#9090a0;transform:scaleX(0.865);transform-origin:0 50%;">• • •</div>
<div class="t" style="right:236.80px;top:210.19px;line-height:13.60px;font-size:6.8px;color:#000;transform:scaleX(0.9);transform-origin:100% 50%;">15907,80</div>
<div class="t" style="right:151.00px;top:210.19px;line-height:13.60px;font-size:6.8px;color:#000;transform:scaleX(0.885);transform-origin:100% 50%;">0,00</div>
<div class="t" style="right:66.00px;top:210.19px;line-height:13.60px;font-size:6.8px;color:#0000ff;transform:scaleX(0.9);transform-origin:100% 50%;">15907,80</div>
<div style="left:50.00px;top:220.27px;width:6.20px;height:8.97px;background:#ebe8d8;box-shadow:inset -0.6px -0.6px #c5c2b2"></div>
<div style="left:319.70px;top:220.27px;width:255.80px;height:8.97px;background:#fdfcec"></div>
<div style="left:56.20px;top:228.34px;width:519.30px;height:0.90px;background:#e6e4da"></div>
<div style="left:140.80px;top:220.27px;width:0.80px;height:8.97px;background:#d8d6cc"></div>
<div style="left:319.30px;top:220.27px;width:0.80px;height:8.97px;background:#d8d6cc"></div>
<div style="left:404.30px;top:220.27px;width:0.80px;height:8.97px;background:#d8d6cc"></div>
<div style="left:489.90px;top:220.27px;width:0.80px;height:8.97px;background:#d8d6cc"></div>
<div style="left:314.00px;top:220.87px;width:5.40px;height:7.77px;background:linear-gradient(135deg,#dde6fd,#b9cdf8);border-radius:1px"></div>
<svg style="position:absolute;left:314.20px;top:222.95px" width="5" height="4"><path d="M0.5 0.8 L2.5 2.8 L4.5 0.8" stroke="#4d6185" stroke-width="1.2" fill="none"/></svg>
<div class="t" style="right:500.00px;top:219.16px;line-height:13.60px;font-size:6.8px;color:#000;transform:scaleX(0.885);transform-origin:100% 50%;">2</div>
<div class="t" style="left:142.80px;top:219.16px;line-height:13.60px;font-size:6.8px;color:#000;transform:scaleX(0.865);transform-origin:0 50%;">АТЗТ "Укрмпин"</div>
<div class="t" style="right:236.80px;top:219.16px;line-height:13.60px;font-size:6.8px;color:#000;transform:scaleX(0.9);transform-origin:100% 50%;">216,00</div>
<div class="t" style="right:151.00px;top:219.16px;line-height:13.60px;font-size:6.8px;color:#000;transform:scaleX(0.885);transform-origin:100% 50%;">0,00</div>
<div class="t" style="right:66.00px;top:219.16px;line-height:13.60px;font-size:6.8px;color:#3030e8;transform:scaleX(0.9);transform-origin:100% 50%;">216,00</div>
<div style="left:50.00px;top:229.24px;width:6.20px;height:8.97px;background:#ebe8d8;box-shadow:inset -0.6px -0.6px #c5c2b2"></div>
<div style="left:319.70px;top:229.24px;width:255.80px;height:8.97px;background:#fdfcec"></div>
<div style="left:56.20px;top:237.31px;width:519.30px;height:0.90px;background:#e6e4da"></div>
<div style="left:140.80px;top:229.24px;width:0.80px;height:8.97px;background:#d8d6cc"></div>
<div style="left:319.30px;top:229.24px;width:0.80px;height:8.97px;background:#d8d6cc"></div>
<div style="left:404.30px;top:229.24px;width:0.80px;height:8.97px;background:#d8d6cc"></div>
<div style="left:489.90px;top:229.24px;width:0.80px;height:8.97px;background:#d8d6cc"></div>
<div style="left:314.00px;top:229.84px;width:5.40px;height:7.77px;background:linear-gradient(135deg,#dde6fd,#b9cdf8);border-radius:1px"></div>
<svg style="position:absolute;left:314.20px;top:231.93px" width="5" height="4"><path d="M0.5 0.8 L2.5 2.8 L4.5 0.8" stroke="#4d6185" stroke-width="1.2" fill="none"/></svg>
<div class="t" style="right:500.00px;top:228.13px;line-height:13.60px;font-size:6.8px;color:#000;transform:scaleX(0.885);transform-origin:100% 50%;">3</div>
<div class="t" style="left:142.80px;top:228.13px;line-height:13.60px;font-size:6.8px;color:#000;transform:scaleX(0.865);transform-origin:0 50%;">Бондоренко В.В.</div>
<div class="t" style="right:236.80px;top:228.13px;line-height:13.60px;font-size:6.8px;color:#000;transform:scaleX(0.9);transform-origin:100% 50%;">120,00</div>
<div class="t" style="right:151.00px;top:228.13px;line-height:13.60px;font-size:6.8px;color:#000;transform:scaleX(0.885);transform-origin:100% 50%;">0,00</div>
<div class="t" style="right:66.00px;top:228.13px;line-height:13.60px;font-size:6.8px;color:#3030e8;transform:scaleX(0.9);transform-origin:100% 50%;">120,00</div>
<div style="left:50.00px;top:238.21px;width:6.20px;height:8.97px;background:#ebe8d8;box-shadow:inset -0.6px -0.6px #c5c2b2"></div>
<div style="left:319.70px;top:238.21px;width:255.80px;height:8.97px;background:#fdfcec"></div>
<div style="left:56.20px;top:246.28px;width:519.30px;height:0.90px;background:#e6e4da"></div>
<div style="left:140.80px;top:238.21px;width:0.80px;height:8.97px;background:#d8d6cc"></div>
<div style="left:319.30px;top:238.21px;width:0.80px;height:8.97px;background:#d8d6cc"></div>
<div style="left:404.30px;top:238.21px;width:0.80px;height:8.97px;background:#d8d6cc"></div>
<div style="left:489.90px;top:238.21px;width:0.80px;height:8.97px;background:#d8d6cc"></div>
<div style="left:314.00px;top:238.81px;width:5.40px;height:7.77px;background:linear-gradient(135deg,#dde6fd,#b9cdf8);border-radius:1px"></div>
<svg style="position:absolute;left:314.20px;top:240.89px" width="5" height="4"><path d="M0.5 0.8 L2.5 2.8 L4.5 0.8" stroke="#4d6185" stroke-width="1.2" fill="none"/></svg>
<div class="t" style="right:500.00px;top:237.09px;line-height:13.60px;font-size:6.8px;color:#000;transform:scaleX(0.885);transform-origin:100% 50%;">4</div>
<div class="t" style="left:142.80px;top:237.09px;line-height:13.60px;font-size:6.8px;color:#000;transform:scaleX(0.865);transform-origin:0 50%;">ДП "Гарантия-Трейд"</div>
<div class="t" style="right:236.80px;top:237.09px;line-height:13.60px;font-size:6.8px;color:#000;transform:scaleX(0.9);transform-origin:100% 50%;">40,44</div>
<div class="t" style="right:151.00px;top:237.09px;line-height:13.60px;font-size:6.8px;color:#000;transform:scaleX(0.885);transform-origin:100% 50%;">0,00</div>
<div class="t" style="right:66.00px;top:237.09px;line-height:13.60px;font-size:6.8px;color:#3030e8;transform:scaleX(0.9);transform-origin:100% 50%;">40,44</div>
<div style="left:50.00px;top:247.18px;width:6.20px;height:8.97px;background:#ebe8d8;box-shadow:inset -0.6px -0.6px #c5c2b2"></div>
<div style="left:319.70px;top:247.18px;width:255.80px;height:8.97px;background:#fdfcec"></div>
<div style="left:56.20px;top:255.25px;width:519.30px;height:0.90px;background:#e6e4da"></div>
<div style="left:140.80px;top:247.18px;width:0.80px;height:8.97px;background:#d8d6cc"></div>
<div style="left:319.30px;top:247.18px;width:0.80px;height:8.97px;background:#d8d6cc"></div>
<div style="left:404.30px;top:247.18px;width:0.80px;height:8.97px;background:#d8d6cc"></div>
<div style="left:489.90px;top:247.18px;width:0.80px;height:8.97px;background:#d8d6cc"></div>
<div style="left:314.00px;top:247.78px;width:5.40px;height:7.77px;background:linear-gradient(135deg,#dde6fd,#b9cdf8);border-radius:1px"></div>
<svg style="position:absolute;left:314.20px;top:249.87px" width="5" height="4"><path d="M0.5 0.8 L2.5 2.8 L4.5 0.8" stroke="#4d6185" stroke-width="1.2" fill="none"/></svg>
<div class="t" style="right:500.00px;top:246.07px;line-height:13.60px;font-size:6.8px;color:#000;transform:scaleX(0.885);transform-origin:100% 50%;">5</div>
<div class="t" style="left:142.80px;top:246.07px;line-height:13.60px;font-size:6.8px;color:#000;transform:scaleX(0.865);transform-origin:0 50%;">ДП "Капро"</div>
<div class="t" style="right:236.80px;top:246.07px;line-height:13.60px;font-size:6.8px;color:#000;transform:scaleX(0.9);transform-origin:100% 50%;">524,72</div>
<div class="t" style="right:151.00px;top:246.07px;line-height:13.60px;font-size:6.8px;color:#000;transform:scaleX(0.885);transform-origin:100% 50%;">0,00</div>
<div class="t" style="right:66.00px;top:246.07px;line-height:13.60px;font-size:6.8px;color:#3030e8;transform:scaleX(0.9);transform-origin:100% 50%;">524,72</div>
<div style="left:50.00px;top:256.15px;width:6.20px;height:8.97px;background:#ebe8d8;box-shadow:inset -0.6px -0.6px #c5c2b2"></div>
<div style="left:319.70px;top:256.15px;width:255.80px;height:8.97px;background:#fdfcec"></div>
<div style="left:56.20px;top:264.22px;width:519.30px;height:0.90px;background:#e6e4da"></div>
<div style="left:140.80px;top:256.15px;width:0.80px;height:8.97px;background:#d8d6cc"></div>
<div style="left:319.30px;top:256.15px;width:0.80px;height:8.97px;background:#d8d6cc"></div>
<div style="left:404.30px;top:256.15px;width:0.80px;height:8.97px;background:#d8d6cc"></div>
<div style="left:489.90px;top:256.15px;width:0.80px;height:8.97px;background:#d8d6cc"></div>
<div style="left:314.00px;top:256.75px;width:5.40px;height:7.77px;background:linear-gradient(135deg,#dde6fd,#b9cdf8);border-radius:1px"></div>
<svg style="position:absolute;left:314.20px;top:258.84px" width="5" height="4"><path d="M0.5 0.8 L2.5 2.8 L4.5 0.8" stroke="#4d6185" stroke-width="1.2" fill="none"/></svg>
<div class="t" style="right:500.00px;top:255.04px;line-height:13.60px;font-size:6.8px;color:#000;transform:scaleX(0.885);transform-origin:100% 50%;">6</div>
<div class="t" style="left:142.80px;top:255.04px;line-height:13.60px;font-size:6.8px;color:#000;transform:scaleX(0.865);transform-origin:0 50%;">ДП "Каіза-Трейд"</div>
<div class="t" style="right:236.80px;top:255.04px;line-height:13.60px;font-size:6.8px;color:#000;transform:scaleX(0.9);transform-origin:100% 50%;">1140,15</div>
<div class="t" style="right:151.00px;top:255.04px;line-height:13.60px;font-size:6.8px;color:#000;transform:scaleX(0.885);transform-origin:100% 50%;">0,00</div>
<div class="t" style="right:66.00px;top:255.04px;line-height:13.60px;font-size:6.8px;color:#3030e8;transform:scaleX(0.9);transform-origin:100% 50%;">1140,15</div>
<div style="left:50.00px;top:265.12px;width:6.20px;height:8.97px;background:#ebe8d8;box-shadow:inset -0.6px -0.6px #c5c2b2"></div>
<div style="left:319.70px;top:265.12px;width:255.80px;height:8.97px;background:#fdfcec"></div>
<div style="left:56.20px;top:273.19px;width:519.30px;height:0.90px;background:#e6e4da"></div>
<div style="left:140.80px;top:265.12px;width:0.80px;height:8.97px;background:#d8d6cc"></div>
<div style="left:319.30px;top:265.12px;width:0.80px;height:8.97px;background:#d8d6cc"></div>
<div style="left:404.30px;top:265.12px;width:0.80px;height:8.97px;background:#d8d6cc"></div>
<div style="left:489.90px;top:265.12px;width:0.80px;height:8.97px;background:#d8d6cc"></div>
<div style="left:314.00px;top:265.72px;width:5.40px;height:7.77px;background:linear-gradient(135deg,#dde6fd,#b9cdf8);border-radius:1px"></div>
<svg style="position:absolute;left:314.20px;top:267.81px" width="5" height="4"><path d="M0.5 0.8 L2.5 2.8 L4.5 0.8" stroke="#4d6185" stroke-width="1.2" fill="none"/></svg>
<div class="t" style="right:500.00px;top:264.00px;line-height:13.60px;font-size:6.8px;color:#000;transform:scaleX(0.885);transform-origin:100% 50%;">7</div>
<div class="t" style="left:142.80px;top:264.00px;line-height:13.60px;font-size:6.8px;color:#000;transform:scaleX(0.865);transform-origin:0 50%;">ДП "Пилснер Україна"</div>
<div class="t" style="right:236.80px;top:264.00px;line-height:13.60px;font-size:6.8px;color:#000;transform:scaleX(0.9);transform-origin:100% 50%;">1154,41</div>
<div class="t" style="right:151.00px;top:264.00px;line-height:13.60px;font-size:6.8px;color:#000;transform:scaleX(0.885);transform-origin:100% 50%;">0,00</div>
<div class="t" style="right:66.00px;top:264.00px;line-height:13.60px;font-size:6.8px;color:#3030e8;transform:scaleX(0.9);transform-origin:100% 50%;">1154,41</div>
<div style="left:50.00px;top:274.09px;width:6.20px;height:8.97px;background:#ebe8d8;box-shadow:inset -0.6px -0.6px #c5c2b2"></div>
<div style="left:319.70px;top:274.09px;width:255.80px;height:8.97px;background:#fdfcec"></div>
<div style="left:56.20px;top:282.16px;width:519.30px;height:0.90px;background:#e6e4da"></div>
<div style="left:140.80px;top:274.09px;width:0.80px;height:8.97px;background:#d8d6cc"></div>
<div style="left:319.30px;top:274.09px;width:0.80px;height:8.97px;background:#d8d6cc"></div>
<div style="left:404.30px;top:274.09px;width:0.80px;height:8.97px;background:#d8d6cc"></div>
<div style="left:489.90px;top:274.09px;width:0.80px;height:8.97px;background:#d8d6cc"></div>
<div style="left:314.00px;top:274.69px;width:5.40px;height:7.77px;background:linear-gradient(135deg,#dde6fd,#b9cdf8);border-radius:1px"></div>
<svg style="position:absolute;left:314.20px;top:276.78px" width="5" height="4"><path d="M0.5 0.8 L2.5 2.8 L4.5 0.8" stroke="#4d6185" stroke-width="1.2" fill="none"/></svg>
<div class="t" style="right:500.00px;top:272.98px;line-height:13.60px;font-size:6.8px;color:#000;transform:scaleX(0.885);transform-origin:100% 50%;">8</div>
<div class="t" style="left:142.80px;top:272.98px;line-height:13.60px;font-size:6.8px;color:#000;transform:scaleX(0.865);transform-origin:0 50%;">ЗАТ "Фоззі-Вигурівщина"</div>
<div class="t" style="right:236.80px;top:272.98px;line-height:13.60px;font-size:6.8px;color:#000;transform:scaleX(0.9);transform-origin:100% 50%;">25,88</div>
<div class="t" style="right:151.00px;top:272.98px;line-height:13.60px;font-size:6.8px;color:#000;transform:scaleX(0.885);transform-origin:100% 50%;">0,00</div>
<div class="t" style="right:66.00px;top:272.98px;line-height:13.60px;font-size:6.8px;color:#3030e8;transform:scaleX(0.9);transform-origin:100% 50%;">25,88</div>
<div style="left:50.00px;top:283.06px;width:6.20px;height:8.97px;background:#ebe8d8;box-shadow:inset -0.6px -0.6px #c5c2b2"></div>
<div style="left:319.70px;top:283.06px;width:255.80px;height:8.97px;background:#fdfcec"></div>
<div style="left:56.20px;top:291.13px;width:519.30px;height:0.90px;background:#e6e4da"></div>
<div style="left:140.80px;top:283.06px;width:0.80px;height:8.97px;background:#d8d6cc"></div>
<div style="left:319.30px;top:283.06px;width:0.80px;height:8.97px;background:#d8d6cc"></div>
<div style="left:404.30px;top:283.06px;width:0.80px;height:8.97px;background:#d8d6cc"></div>
<div style="left:489.90px;top:283.06px;width:0.80px;height:8.97px;background:#d8d6cc"></div>
<div style="left:314.00px;top:283.66px;width:5.40px;height:7.77px;background:linear-gradient(135deg,#dde6fd,#b9cdf8);border-radius:1px"></div>
<svg style="position:absolute;left:314.20px;top:285.75px" width="5" height="4"><path d="M0.5 0.8 L2.5 2.8 L4.5 0.8" stroke="#4d6185" stroke-width="1.2" fill="none"/></svg>
<div class="t" style="right:500.00px;top:281.94px;line-height:13.60px;font-size:6.8px;color:#000;transform:scaleX(0.885);transform-origin:100% 50%;">9</div>
<div class="t" style="left:142.80px;top:281.94px;line-height:13.60px;font-size:6.8px;color:#000;transform:scaleX(0.865);transform-origin:0 50%;">Магазин "Продукти"</div>
<div class="t" style="right:236.80px;top:281.94px;line-height:13.60px;font-size:6.8px;color:#000;transform:scaleX(0.9);transform-origin:100% 50%;">5,40</div>
<div class="t" style="right:151.00px;top:281.94px;line-height:13.60px;font-size:6.8px;color:#000;transform:scaleX(0.885);transform-origin:100% 50%;">0,00</div>
<div class="t" style="right:66.00px;top:281.94px;line-height:13.60px;font-size:6.8px;color:#3030e8;transform:scaleX(0.9);transform-origin:100% 50%;">5,40</div>
<div style="left:50.00px;top:292.03px;width:6.20px;height:8.97px;background:#ebe8d8;box-shadow:inset -0.6px -0.6px #c5c2b2"></div>
<div style="left:319.70px;top:292.03px;width:255.80px;height:8.97px;background:#fdfcec"></div>
<div style="left:56.20px;top:300.10px;width:519.30px;height:0.90px;background:#e6e4da"></div>
<div style="left:140.80px;top:292.03px;width:0.80px;height:8.97px;background:#d8d6cc"></div>
<div style="left:319.30px;top:292.03px;width:0.80px;height:8.97px;background:#d8d6cc"></div>
<div style="left:404.30px;top:292.03px;width:0.80px;height:8.97px;background:#d8d6cc"></div>
<div style="left:489.90px;top:292.03px;width:0.80px;height:8.97px;background:#d8d6cc"></div>
<div style="left:314.00px;top:292.63px;width:5.40px;height:7.77px;background:linear-gradient(135deg,#dde6fd,#b9cdf8);border-radius:1px"></div>
<svg style="position:absolute;left:314.20px;top:294.72px" width="5" height="4"><path d="M0.5 0.8 L2.5 2.8 L4.5 0.8" stroke="#4d6185" stroke-width="1.2" fill="none"/></svg>
<div class="t" style="right:500.00px;top:290.92px;line-height:13.60px;font-size:6.8px;color:#000;transform:scaleX(0.885);transform-origin:100% 50%;">10</div>
<div class="t" style="left:142.80px;top:290.92px;line-height:13.60px;font-size:6.8px;color:#000;transform:scaleX(0.865);transform-origin:0 50%;">Нива</div>
<div class="t" style="right:236.80px;top:290.92px;line-height:13.60px;font-size:6.8px;color:#000;transform:scaleX(0.9);transform-origin:100% 50%;">146,24</div>
<div class="t" style="right:151.00px;top:290.92px;line-height:13.60px;font-size:6.8px;color:#000;transform:scaleX(0.885);transform-origin:100% 50%;">0,00</div>
<div class="t" style="right:66.00px;top:290.92px;line-height:13.60px;font-size:6.8px;color:#3030e8;transform:scaleX(0.9);transform-origin:100% 50%;">146,24</div>
<div style="left:50.00px;top:301.00px;width:6.20px;height:8.97px;background:#ebe8d8;box-shadow:inset -0.6px -0.6px #c5c2b2"></div>
<div style="left:319.70px;top:301.00px;width:255.80px;height:8.97px;background:#fdfcec"></div>
<div style="left:56.20px;top:309.07px;width:519.30px;height:0.90px;background:#e6e4da"></div>
<div style="left:140.80px;top:301.00px;width:0.80px;height:8.97px;background:#d8d6cc"></div>
<div style="left:319.30px;top:301.00px;width:0.80px;height:8.97px;background:#d8d6cc"></div>
<div style="left:404.30px;top:301.00px;width:0.80px;height:8.97px;background:#d8d6cc"></div>
<div style="left:489.90px;top:301.00px;width:0.80px;height:8.97px;background:#d8d6cc"></div>
<div style="left:314.00px;top:301.60px;width:5.40px;height:7.77px;background:linear-gradient(135deg,#dde6fd,#b9cdf8);border-radius:1px"></div>
<svg style="position:absolute;left:314.20px;top:303.69px" width="5" height="4"><path d="M0.5 0.8 L2.5 2.8 L4.5 0.8" stroke="#4d6185" stroke-width="1.2" fill="none"/></svg>
<div class="t" style="right:500.00px;top:299.88px;line-height:13.60px;font-size:6.8px;color:#000;transform:scaleX(0.885);transform-origin:100% 50%;">11</div>
<div class="t" style="left:142.80px;top:299.88px;line-height:13.60px;font-size:6.8px;color:#000;transform:scaleX(0.865);transform-origin:0 50%;">Ніка Юлія Вікторівна</div>
<div class="t" style="right:236.80px;top:299.88px;line-height:13.60px;font-size:6.8px;color:#000;transform:scaleX(0.9);transform-origin:100% 50%;">40,23</div>
<div class="t" style="right:151.00px;top:299.88px;line-height:13.60px;font-size:6.8px;color:#000;transform:scaleX(0.885);transform-origin:100% 50%;">0,00</div>
<div class="t" style="right:66.00px;top:299.88px;line-height:13.60px;font-size:6.8px;color:#3030e8;transform:scaleX(0.9);transform-origin:100% 50%;">40,23</div>
<div style="left:50.00px;top:309.97px;width:6.20px;height:8.97px;background:#ebe8d8;box-shadow:inset -0.6px -0.6px #c5c2b2"></div>
<div style="left:319.70px;top:309.97px;width:255.80px;height:8.97px;background:#fdfcec"></div>
<div style="left:56.20px;top:318.04px;width:519.30px;height:0.90px;background:#e6e4da"></div>
<div style="left:140.80px;top:309.97px;width:0.80px;height:8.97px;background:#d8d6cc"></div>
<div style="left:319.30px;top:309.97px;width:0.80px;height:8.97px;background:#d8d6cc"></div>
<div style="left:404.30px;top:309.97px;width:0.80px;height:8.97px;background:#d8d6cc"></div>
<div style="left:489.90px;top:309.97px;width:0.80px;height:8.97px;background:#d8d6cc"></div>
<div style="left:314.00px;top:310.57px;width:5.40px;height:7.77px;background:linear-gradient(135deg,#dde6fd,#b9cdf8);border-radius:1px"></div>
<svg style="position:absolute;left:314.20px;top:312.66px" width="5" height="4"><path d="M0.5 0.8 L2.5 2.8 L4.5 0.8" stroke="#4d6185" stroke-width="1.2" fill="none"/></svg>
<div class="t" style="right:500.00px;top:308.86px;line-height:13.60px;font-size:6.8px;color:#000;transform:scaleX(0.885);transform-origin:100% 50%;">12</div>
<div class="t" style="left:142.80px;top:308.86px;line-height:13.60px;font-size:6.8px;color:#000;transform:scaleX(0.865);transform-origin:0 50%;">ООО ""Би энд Пи, ЛТД""</div>
<div class="t" style="right:236.80px;top:308.86px;line-height:13.60px;font-size:6.8px;color:#000;transform:scaleX(0.9);transform-origin:100% 50%;">3750,42</div>
<div class="t" style="right:151.00px;top:308.86px;line-height:13.60px;font-size:6.8px;color:#000;transform:scaleX(0.885);transform-origin:100% 50%;">0,00</div>
<div class="t" style="right:66.00px;top:308.86px;line-height:13.60px;font-size:6.8px;color:#3030e8;transform:scaleX(0.9);transform-origin:100% 50%;">3750,42</div>
<div style="left:50.00px;top:318.94px;width:6.20px;height:8.97px;background:#ebe8d8;box-shadow:inset -0.6px -0.6px #c5c2b2"></div>
<div style="left:319.70px;top:318.94px;width:255.80px;height:8.97px;background:#fdfcec"></div>
<div style="left:56.20px;top:327.01px;width:519.30px;height:0.90px;background:#e6e4da"></div>
<div style="left:140.80px;top:318.94px;width:0.80px;height:8.97px;background:#d8d6cc"></div>
<div style="left:319.30px;top:318.94px;width:0.80px;height:8.97px;background:#d8d6cc"></div>
<div style="left:404.30px;top:318.94px;width:0.80px;height:8.97px;background:#d8d6cc"></div>
<div style="left:489.90px;top:318.94px;width:0.80px;height:8.97px;background:#d8d6cc"></div>
<div style="left:314.00px;top:319.54px;width:5.40px;height:7.77px;background:linear-gradient(135deg,#dde6fd,#b9cdf8);border-radius:1px"></div>
<svg style="position:absolute;left:314.20px;top:321.63px" width="5" height="4"><path d="M0.5 0.8 L2.5 2.8 L4.5 0.8" stroke="#4d6185" stroke-width="1.2" fill="none"/></svg>
<div class="t" style="right:500.00px;top:317.83px;line-height:13.60px;font-size:6.8px;color:#000;transform:scaleX(0.885);transform-origin:100% 50%;">13</div>
<div class="t" style="left:142.80px;top:317.83px;line-height:13.60px;font-size:6.8px;color:#000;transform:scaleX(0.865);transform-origin:0 50%;">ООО "Виктерприбор"</div>
<div class="t" style="right:236.80px;top:317.83px;line-height:13.60px;font-size:6.8px;color:#000;transform:scaleX(0.9);transform-origin:100% 50%;">66,60</div>
<div class="t" style="right:151.00px;top:317.83px;line-height:13.60px;font-size:6.8px;color:#000;transform:scaleX(0.885);transform-origin:100% 50%;">0,00</div>
<div class="t" style="right:66.00px;top:317.83px;line-height:13.60px;font-size:6.8px;color:#3030e8;transform:scaleX(0.9);transform-origin:100% 50%;">66,60</div>
<div style="left:50.00px;top:327.91px;width:6.20px;height:8.97px;background:#ebe8d8;box-shadow:inset -0.6px -0.6px #c5c2b2"></div>
<div style="left:319.70px;top:327.91px;width:255.80px;height:8.97px;background:#fdfcec"></div>
<div style="left:56.20px;top:335.98px;width:519.30px;height:0.90px;background:#e6e4da"></div>
<div style="left:140.80px;top:327.91px;width:0.80px;height:8.97px;background:#d8d6cc"></div>
<div style="left:319.30px;top:327.91px;width:0.80px;height:8.97px;background:#d8d6cc"></div>
<div style="left:404.30px;top:327.91px;width:0.80px;height:8.97px;background:#d8d6cc"></div>
<div style="left:489.90px;top:327.91px;width:0.80px;height:8.97px;background:#d8d6cc"></div>
<div style="left:314.00px;top:328.51px;width:5.40px;height:7.77px;background:linear-gradient(135deg,#dde6fd,#b9cdf8);border-radius:1px"></div>
<svg style="position:absolute;left:314.20px;top:330.60px" width="5" height="4"><path d="M0.5 0.8 L2.5 2.8 L4.5 0.8" stroke="#4d6185" stroke-width="1.2" fill="none"/></svg>
<div class="t" style="right:500.00px;top:326.80px;line-height:13.60px;font-size:6.8px;color:#000;transform:scaleX(0.885);transform-origin:100% 50%;">14</div>
<div class="t" style="left:142.80px;top:326.80px;line-height:13.60px;font-size:6.8px;color:#000;transform:scaleX(0.865);transform-origin:0 50%;">ООО "Юнитрейд"</div>
<div class="t" style="right:236.80px;top:326.80px;line-height:13.60px;font-size:6.8px;color:#000;transform:scaleX(0.9);transform-origin:100% 50%;">10732,03</div>
<div class="t" style="right:151.00px;top:326.80px;line-height:13.60px;font-size:6.8px;color:#000;transform:scaleX(0.885);transform-origin:100% 50%;">0,00</div>
<div class="t" style="right:66.00px;top:326.80px;line-height:13.60px;font-size:6.8px;color:#3030e8;transform:scaleX(0.9);transform-origin:100% 50%;">10732,03</div>
<div style="left:50.00px;top:336.88px;width:6.20px;height:8.97px;background:#ebe8d8;box-shadow:inset -0.6px -0.6px #c5c2b2"></div>
<div style="left:319.70px;top:336.88px;width:255.80px;height:8.97px;background:#fdfcec"></div>
<div style="left:56.20px;top:344.95px;width:519.30px;height:0.90px;background:#e6e4da"></div>
<div style="left:140.80px;top:336.88px;width:0.80px;height:8.97px;background:#d8d6cc"></div>
<div style="left:319.30px;top:336.88px;width:0.80px;height:8.97px;background:#d8d6cc"></div>
<div style="left:404.30px;top:336.88px;width:0.80px;height:8.97px;background:#d8d6cc"></div>
<div style="left:489.90px;top:336.88px;width:0.80px;height:8.97px;background:#d8d6cc"></div>
<div style="left:314.00px;top:337.48px;width:5.40px;height:7.77px;background:linear-gradient(135deg,#dde6fd,#b9cdf8);border-radius:1px"></div>
<svg style="position:absolute;left:314.20px;top:339.56px" width="5" height="4"><path d="M0.5 0.8 L2.5 2.8 L4.5 0.8" stroke="#4d6185" stroke-width="1.2" fill="none"/></svg>
<div class="t" style="right:500.00px;top:335.76px;line-height:13.60px;font-size:6.8px;color:#000;transform:scaleX(0.885);transform-origin:100% 50%;">15</div>
<div class="t" style="left:142.80px;top:335.76px;line-height:13.60px;font-size:6.8px;color:#000;transform:scaleX(0.865);transform-origin:0 50%;">Петровка</div>
<div class="t" style="right:236.80px;top:335.76px;line-height:13.60px;font-size:6.8px;color:#000;transform:scaleX(0.9);transform-origin:100% 50%;">197,16</div>
<div class="t" style="right:151.00px;top:335.76px;line-height:13.60px;font-size:6.8px;color:#000;transform:scaleX(0.885);transform-origin:100% 50%;">0,00</div>
<div class="t" style="right:66.00px;top:335.76px;line-height:13.60px;font-size:6.8px;color:#3030e8;transform:scaleX(0.9);transform-origin:100% 50%;">197,16</div>
<div style="left:50.00px;top:345.85px;width:6.20px;height:8.97px;background:#ebe8d8;box-shadow:inset -0.6px -0.6px #c5c2b2"></div>
<div style="left:319.70px;top:345.85px;width:255.80px;height:8.97px;background:#fdfcec"></div>
<div style="left:56.20px;top:353.92px;width:519.30px;height:0.90px;background:#e6e4da"></div>
<div style="left:140.80px;top:345.85px;width:0.80px;height:8.97px;background:#d8d6cc"></div>
<div style="left:319.30px;top:345.85px;width:0.80px;height:8.97px;background:#d8d6cc"></div>
<div style="left:404.30px;top:345.85px;width:0.80px;height:8.97px;background:#d8d6cc"></div>
<div style="left:489.90px;top:345.85px;width:0.80px;height:8.97px;background:#d8d6cc"></div>
<div style="left:314.00px;top:346.45px;width:5.40px;height:7.77px;background:linear-gradient(135deg,#dde6fd,#b9cdf8);border-radius:1px"></div>
<svg style="position:absolute;left:314.20px;top:348.54px" width="5" height="4"><path d="M0.5 0.8 L2.5 2.8 L4.5 0.8" stroke="#4d6185" stroke-width="1.2" fill="none"/></svg>
<div class="t" style="right:500.00px;top:344.74px;line-height:13.60px;font-size:6.8px;color:#000;transform:scaleX(0.885);transform-origin:100% 50%;">16</div>
<div class="t" style="left:142.80px;top:344.74px;line-height:13.60px;font-size:6.8px;color:#000;transform:scaleX(0.865);transform-origin:0 50%;">Пожинвентар</div>
<div class="t" style="right:236.80px;top:344.74px;line-height:13.60px;font-size:6.8px;color:#000;transform:scaleX(0.9);transform-origin:100% 50%;">1860,70</div>
<div class="t" style="right:151.00px;top:344.74px;line-height:13.60px;font-size:6.8px;color:#000;transform:scaleX(0.885);transform-origin:100% 50%;">0,00</div>
<div class="t" style="right:66.00px;top:344.74px;line-height:13.60px;font-size:6.8px;color:#3030e8;transform:scaleX(0.9);transform-origin:100% 50%;">1860,70</div>
<div style="left:50.00px;top:354.82px;width:6.20px;height:8.97px;background:#ebe8d8;box-shadow:inset -0.6px -0.6px #c5c2b2"></div>
<div style="left:319.70px;top:354.82px;width:255.80px;height:8.97px;background:#fdfcec"></div>
<div style="left:56.20px;top:362.89px;width:519.30px;height:0.90px;background:#e6e4da"></div>
<div style="left:140.80px;top:354.82px;width:0.80px;height:8.97px;background:#d8d6cc"></div>
<div style="left:319.30px;top:354.82px;width:0.80px;height:8.97px;background:#d8d6cc"></div>
<div style="left:404.30px;top:354.82px;width:0.80px;height:8.97px;background:#d8d6cc"></div>
<div style="left:489.90px;top:354.82px;width:0.80px;height:8.97px;background:#d8d6cc"></div>
<div style="left:314.00px;top:355.42px;width:5.40px;height:7.77px;background:linear-gradient(135deg,#dde6fd,#b9cdf8);border-radius:1px"></div>
<svg style="position:absolute;left:314.20px;top:357.51px" width="5" height="4"><path d="M0.5 0.8 L2.5 2.8 L4.5 0.8" stroke="#4d6185" stroke-width="1.2" fill="none"/></svg>
<div class="t" style="right:500.00px;top:353.71px;line-height:13.60px;font-size:6.8px;color:#000;transform:scaleX(0.885);transform-origin:100% 50%;">17</div>
<div class="t" style="left:142.80px;top:353.71px;line-height:13.60px;font-size:6.8px;color:#000;transform:scaleX(0.865);transform-origin:0 50%;">ПП "Купава"</div>
<div class="t" style="right:236.80px;top:353.71px;line-height:13.60px;font-size:6.8px;color:#000;transform:scaleX(0.9);transform-origin:100% 50%;">2092,44</div>
<div class="t" style="right:151.00px;top:353.71px;line-height:13.60px;font-size:6.8px;color:#000;transform:scaleX(0.885);transform-origin:100% 50%;">0,00</div>
<div class="t" style="right:66.00px;top:353.71px;line-height:13.60px;font-size:6.8px;color:#3030e8;transform:scaleX(0.9);transform-origin:100% 50%;">2092,44</div>
<div style="left:50.00px;top:363.79px;width:6.20px;height:8.97px;background:#ebe8d8;box-shadow:inset -0.6px -0.6px #c5c2b2"></div>
<div style="left:319.70px;top:363.79px;width:255.80px;height:8.97px;background:#fdfcec"></div>
<div style="left:56.20px;top:371.86px;width:519.30px;height:0.90px;background:#e6e4da"></div>
<div style="left:140.80px;top:363.79px;width:0.80px;height:8.97px;background:#d8d6cc"></div>
<div style="left:319.30px;top:363.79px;width:0.80px;height:8.97px;background:#d8d6cc"></div>
<div style="left:404.30px;top:363.79px;width:0.80px;height:8.97px;background:#d8d6cc"></div>
<div style="left:489.90px;top:363.79px;width:0.80px;height:8.97px;background:#d8d6cc"></div>
<div style="left:314.00px;top:364.39px;width:5.40px;height:7.77px;background:linear-gradient(135deg,#dde6fd,#b9cdf8);border-radius:1px"></div>
<svg style="position:absolute;left:314.20px;top:366.48px" width="5" height="4"><path d="M0.5 0.8 L2.5 2.8 L4.5 0.8" stroke="#4d6185" stroke-width="1.2" fill="none"/></svg>
<div class="t" style="right:500.00px;top:362.68px;line-height:13.60px;font-size:6.8px;color:#000;transform:scaleX(0.885);transform-origin:100% 50%;">18</div>
<div class="t" style="left:142.80px;top:362.68px;line-height:13.60px;font-size:6.8px;color:#000;transform:scaleX(0.865);transform-origin:0 50%;">ПП "Поліщук"</div>
<div class="t" style="right:236.80px;top:362.68px;line-height:13.60px;font-size:6.8px;color:#000;transform:scaleX(0.9);transform-origin:100% 50%;">72,13</div>
<div class="t" style="right:151.00px;top:362.68px;line-height:13.60px;font-size:6.8px;color:#000;transform:scaleX(0.885);transform-origin:100% 50%;">0,00</div>
<div class="t" style="right:66.00px;top:362.68px;line-height:13.60px;font-size:6.8px;color:#3030e8;transform:scaleX(0.9);transform-origin:100% 50%;">72,13</div>
<div style="left:50.00px;top:372.76px;width:6.20px;height:8.97px;background:#ebe8d8;box-shadow:inset -0.6px -0.6px #c5c2b2"></div>
<div style="left:319.70px;top:372.76px;width:255.80px;height:8.97px;background:#fdfcec"></div>
<div style="left:56.20px;top:380.83px;width:519.30px;height:0.90px;background:#e6e4da"></div>
<div style="left:140.80px;top:372.76px;width:0.80px;height:8.97px;background:#d8d6cc"></div>
<div style="left:319.30px;top:372.76px;width:0.80px;height:8.97px;background:#d8d6cc"></div>
<div style="left:404.30px;top:372.76px;width:0.80px;height:8.97px;background:#d8d6cc"></div>
<div style="left:489.90px;top:372.76px;width:0.80px;height:8.97px;background:#d8d6cc"></div>
<div style="left:314.00px;top:373.36px;width:5.40px;height:7.77px;background:linear-gradient(135deg,#dde6fd,#b9cdf8);border-radius:1px"></div>
<svg style="position:absolute;left:314.20px;top:375.44px" width="5" height="4"><path d="M0.5 0.8 L2.5 2.8 L4.5 0.8" stroke="#4d6185" stroke-width="1.2" fill="none"/></svg>
<div class="t" style="right:500.00px;top:371.64px;line-height:13.60px;font-size:6.8px;color:#000;transform:scaleX(0.885);transform-origin:100% 50%;">19</div>
<div class="t" style="left:142.80px;top:371.64px;line-height:13.60px;font-size:6.8px;color:#000;transform:scaleX(0.865);transform-origin:0 50%;">ПП "Успіх"</div>
<div class="t" style="right:236.80px;top:371.64px;line-height:13.60px;font-size:6.8px;color:#000;transform:scaleX(0.9);transform-origin:100% 50%;">318,69</div>
<div class="t" style="right:151.00px;top:371.64px;line-height:13.60px;font-size:6.8px;color:#000;transform:scaleX(0.885);transform-origin:100% 50%;">0,00</div>
<div class="t" style="right:66.00px;top:371.64px;line-height:13.60px;font-size:6.8px;color:#3030e8;transform:scaleX(0.9);transform-origin:100% 50%;">318,69</div>
<div style="left:50.00px;top:381.73px;width:6.20px;height:8.97px;background:#ebe8d8;box-shadow:inset -0.6px -0.6px #c5c2b2"></div>
<div style="left:319.70px;top:381.73px;width:255.80px;height:8.97px;background:#fdfcec"></div>
<div style="left:56.20px;top:389.80px;width:519.30px;height:0.90px;background:#e6e4da"></div>
<div style="left:140.80px;top:381.73px;width:0.80px;height:8.97px;background:#d8d6cc"></div>
<div style="left:319.30px;top:381.73px;width:0.80px;height:8.97px;background:#d8d6cc"></div>
<div style="left:404.30px;top:381.73px;width:0.80px;height:8.97px;background:#d8d6cc"></div>
<div style="left:489.90px;top:381.73px;width:0.80px;height:8.97px;background:#d8d6cc"></div>
<div style="left:314.00px;top:382.33px;width:5.40px;height:7.77px;background:linear-gradient(135deg,#dde6fd,#b9cdf8);border-radius:1px"></div>
<svg style="position:absolute;left:314.20px;top:384.42px" width="5" height="4"><path d="M0.5 0.8 L2.5 2.8 L4.5 0.8" stroke="#4d6185" stroke-width="1.2" fill="none"/></svg>
<div class="t" style="right:500.00px;top:380.62px;line-height:13.60px;font-size:6.8px;color:#000;transform:scaleX(0.885);transform-origin:100% 50%;">20</div>
<div class="t" style="left:142.80px;top:380.62px;line-height:13.60px;font-size:6.8px;color:#000;transform:scaleX(0.865);transform-origin:0 50%;">пп "Электа"</div>
<div class="t" style="right:236.80px;top:380.62px;line-height:13.60px;font-size:6.8px;color:#000;transform:scaleX(0.9);transform-origin:100% 50%;">232,61</div>
<div class="t" style="right:151.00px;top:380.62px;line-height:13.60px;font-size:6.8px;color:#000;transform:scaleX(0.885);transform-origin:100% 50%;">0,00</div>
<div class="t" style="right:66.00px;top:380.62px;line-height:13.60px;font-size:6.8px;color:#3030e8;transform:scaleX(0.9);transform-origin:100% 50%;">232,61</div>
<div style="left:50.00px;top:390.70px;width:6.20px;height:8.97px;background:#ebe8d8;box-shadow:inset -0.6px -0.6px #c5c2b2"></div>
<div style="left:319.70px;top:390.70px;width:255.80px;height:8.97px;background:#fdfcec"></div>
<div style="left:56.20px;top:398.77px;width:519.30px;height:0.90px;background:#e6e4da"></div>
<div style="left:140.80px;top:390.70px;width:0.80px;height:8.97px;background:#d8d6cc"></div>
<div style="left:319.30px;top:390.70px;width:0.80px;height:8.97px;background:#d8d6cc"></div>
<div style="left:404.30px;top:390.70px;width:0.80px;height:8.97px;background:#d8d6cc"></div>
<div style="left:489.90px;top:390.70px;width:0.80px;height:8.97px;background:#d8d6cc"></div>
<div style="left:314.00px;top:391.30px;width:5.40px;height:7.77px;background:linear-gradient(135deg,#dde6fd,#b9cdf8);border-radius:1px"></div>
<svg style="position:absolute;left:314.20px;top:393.39px" width="5" height="4"><path d="M0.5 0.8 L2.5 2.8 L4.5 0.8" stroke="#4d6185" stroke-width="1.2" fill="none"/></svg>
<div class="t" style="right:500.00px;top:389.59px;line-height:13.60px;font-size:6.8px;color:#000;transform:scaleX(0.885);transform-origin:100% 50%;">21</div>
<div class="t" style="left:142.80px;top:389.59px;line-height:13.60px;font-size:6.8px;color:#000;transform:scaleX(0.865);transform-origin:0 50%;">ПП "Юнайтед"</div>
<div class="t" style="right:236.80px;top:389.59px;line-height:13.60px;font-size:6.8px;color:#000;transform:scaleX(0.9);transform-origin:100% 50%;">492,00</div>
<div class="t" style="right:151.00px;top:389.59px;line-height:13.60px;font-size:6.8px;color:#000;transform:scaleX(0.885);transform-origin:100% 50%;">0,00</div>
<div class="t" style="right:66.00px;top:389.59px;line-height:13.60px;font-size:6.8px;color:#3030e8;transform:scaleX(0.9);transform-origin:100% 50%;">492,00</div>
<div style="left:50.00px;top:399.67px;width:6.20px;height:8.97px;background:#ebe8d8;box-shadow:inset -0.6px -0.6px #c5c2b2"></div>
<div style="left:319.70px;top:399.67px;width:255.80px;height:8.97px;background:#fdfcec"></div>
<div style="left:56.20px;top:407.74px;width:519.30px;height:0.90px;background:#e6e4da"></div>
<div style="left:140.80px;top:399.67px;width:0.80px;height:8.97px;background:#d8d6cc"></div>
<div style="left:319.30px;top:399.67px;width:0.80px;height:8.97px;background:#d8d6cc"></div>
<div style="left:404.30px;top:399.67px;width:0.80px;height:8.97px;background:#d8d6cc"></div>
<div style="left:489.90px;top:399.67px;width:0.80px;height:8.97px;background:#d8d6cc"></div>
<div style="left:314.00px;top:400.27px;width:5.40px;height:7.77px;background:linear-gradient(135deg,#dde6fd,#b9cdf8);border-radius:1px"></div>
<svg style="position:absolute;left:314.20px;top:402.36px" width="5" height="4"><path d="M0.5 0.8 L2.5 2.8 L4.5 0.8" stroke="#4d6185" stroke-width="1.2" fill="none"/></svg>
<div class="t" style="right:500.00px;top:398.56px;line-height:13.60px;font-size:6.8px;color:#000;transform:scaleX(0.885);transform-origin:100% 50%;">22</div>
<div class="t" style="left:142.80px;top:398.56px;line-height:13.60px;font-size:6.8px;color:#000;transform:scaleX(0.865);transform-origin:0 50%;">СП ТОВ "Адел"</div>
<div class="t" style="right:236.80px;top:398.56px;line-height:13.60px;font-size:6.8px;color:#000;transform:scaleX(0.9);transform-origin:100% 50%;">1871,90</div>
<div class="t" style="right:151.00px;top:398.56px;line-height:13.60px;font-size:6.8px;color:#000;transform:scaleX(0.885);transform-origin:100% 50%;">0,00</div>
<div class="t" style="right:66.00px;top:398.56px;line-height:13.60px;font-size:6.8px;color:#3030e8;transform:scaleX(0.9);transform-origin:100% 50%;">1871,90</div>
<div style="left:50.00px;top:408.64px;width:6.20px;height:8.97px;background:#ebe8d8;box-shadow:inset -0.6px -0.6px #c5c2b2"></div>
<div style="left:319.70px;top:408.64px;width:255.80px;height:8.97px;background:#fdfcec"></div>
<div style="left:56.20px;top:416.71px;width:519.30px;height:0.90px;background:#e6e4da"></div>
<div style="left:140.80px;top:408.64px;width:0.80px;height:8.97px;background:#d8d6cc"></div>
<div style="left:319.30px;top:408.64px;width:0.80px;height:8.97px;background:#d8d6cc"></div>
<div style="left:404.30px;top:408.64px;width:0.80px;height:8.97px;background:#d8d6cc"></div>
<div style="left:489.90px;top:408.64px;width:0.80px;height:8.97px;background:#d8d6cc"></div>
<div style="left:314.00px;top:409.24px;width:5.40px;height:7.77px;background:linear-gradient(135deg,#dde6fd,#b9cdf8);border-radius:1px"></div>
<svg style="position:absolute;left:314.20px;top:411.32px" width="5" height="4"><path d="M0.5 0.8 L2.5 2.8 L4.5 0.8" stroke="#4d6185" stroke-width="1.2" fill="none"/></svg>
<div class="t" style="right:500.00px;top:407.52px;line-height:13.60px;font-size:6.8px;color:#000;transform:scaleX(0.885);transform-origin:100% 50%;">23</div>
<div class="t" style="left:142.80px;top:407.52px;line-height:13.60px;font-size:6.8px;color:#000;transform:scaleX(0.865);transform-origin:0 50%;">СПД "Мамедов Н."</div>
<div class="t" style="right:236.80px;top:407.52px;line-height:13.60px;font-size:6.8px;color:#000;transform:scaleX(0.9);transform-origin:100% 50%;">1434,50</div>
<div class="t" style="right:151.00px;top:407.52px;line-height:13.60px;font-size:6.8px;color:#000;transform:scaleX(0.885);transform-origin:100% 50%;">0,00</div>
<div class="t" style="right:66.00px;top:407.52px;line-height:13.60px;font-size:6.8px;color:#3030e8;transform:scaleX(0.9);transform-origin:100% 50%;">1434,50</div>
<div style="left:50.00px;top:417.61px;width:6.20px;height:8.97px;background:#ebe8d8;box-shadow:inset -0.6px -0.6px #c5c2b2"></div>
<div style="left:319.70px;top:417.61px;width:255.80px;height:8.97px;background:#fdfcec"></div>
<div style="left:56.20px;top:425.68px;width:519.30px;height:0.90px;background:#e6e4da"></div>
<div style="left:140.80px;top:417.61px;width:0.80px;height:8.97px;background:#d8d6cc"></div>
<div style="left:319.30px;top:417.61px;width:0.80px;height:8.97px;background:#d8d6cc"></div>
<div style="left:404.30px;top:417.61px;width:0.80px;height:8.97px;background:#d8d6cc"></div>
<div style="left:489.90px;top:417.61px;width:0.80px;height:8.97px;background:#d8d6cc"></div>
<div style="left:314.00px;top:418.21px;width:5.40px;height:7.77px;background:linear-gradient(135deg,#dde6fd,#b9cdf8);border-radius:1px"></div>
<svg style="position:absolute;left:314.20px;top:420.30px" width="5" height="4"><path d="M0.5 0.8 L2.5 2.8 L4.5 0.8" stroke="#4d6185" stroke-width="1.2" fill="none"/></svg>
<div class="t" style="right:500.00px;top:416.50px;line-height:13.60px;font-size:6.8px;color:#000;transform:scaleX(0.885);transform-origin:100% 50%;">24</div>
<div class="t" style="left:142.80px;top:416.50px;line-height:13.60px;font-size:6.8px;color:#000;transform:scaleX(0.865);transform-origin:0 50%;">СПД "СПД Уракова З.М."</div>
<div class="t" style="right:236.80px;top:416.50px;line-height:13.60px;font-size:6.8px;color:#000;transform:scaleX(0.9);transform-origin:100% 50%;">93,20</div>
<div class="t" style="right:151.00px;top:416.50px;line-height:13.60px;font-size:6.8px;color:#000;transform:scaleX(0.885);transform-origin:100% 50%;">0,00</div>
<div class="t" style="right:66.00px;top:416.50px;line-height:13.60px;font-size:6.8px;color:#3030e8;transform:scaleX(0.9);transform-origin:100% 50%;">93,20</div>
<div style="left:50.00px;top:426.58px;width:6.20px;height:4.62px;background:#ebe8d8"></div>
<div style="left:319.70px;top:426.58px;width:255.80px;height:4.62px;background:#fdfcec"></div>
<div style="left:140.90px;top:426.58px;width:0.60px;height:4.62px;background:#e0e0da"></div>
<div style="left:319.40px;top:426.58px;width:0.60px;height:4.62px;background:#e0e0da"></div>
<div style="left:404.40px;top:426.58px;width:0.60px;height:4.62px;background:#e0e0da"></div>
<div style="left:490.00px;top:426.58px;width:0.60px;height:4.62px;background:#e0e0da"></div>
<div style="left:50.00px;top:431.20px;width:6.20px;height:8.60px;background:#ebe8d8;box-shadow:inset -0.6px 0 #c5c2b2"></div>
<div style="left:56.20px;top:431.20px;width:519.30px;height:8.60px;background:#ffff00"></div>
<div style="left:140.90px;top:431.20px;width:0.60px;height:8.60px;background:#d8d890"></div>
<div style="left:319.40px;top:431.20px;width:0.60px;height:8.60px;background:#d8d890"></div>
<div style="left:404.40px;top:431.20px;width:0.60px;height:8.60px;background:#d8d890"></div>
<div style="left:490.00px;top:431.20px;width:0.60px;height:8.60px;background:#d8d890"></div>
<div class="t" style="right:236.80px;top:430.88px;line-height:12.24px;font-size:6.12px;color:#000;font-weight:bold;-webkit-text-stroke:0;transform:scaleX(1.067);transform-origin:100% 50%;-webkit-text-stroke:0.2px #000">111501,46</div>
<div class="t" style="right:151.00px;top:430.88px;line-height:12.24px;font-size:6.12px;color:#000;font-weight:bold;-webkit-text-stroke:0;transform:scaleX(1.067);transform-origin:100% 50%;-webkit-text-stroke:0.2px #000">53492,40</div>
<div class="t" style="right:66.00px;top:430.88px;line-height:12.24px;font-size:6.12px;color:#000;font-weight:bold;-webkit-text-stroke:0;transform:scaleX(1.067);transform-origin:100% 50%;-webkit-text-stroke:0.2px #000">58009,06</div>
<div style="left:575.50px;top:189.40px;width:8.10px;height:250.40px;background:#fbfbf8"></div>
<div style="left:575.90px;top:196.20px;width:7.40px;height:87.80px;background:linear-gradient(90deg,#d0dcf8,#c2d2f6);border-radius:1px"></div>
<div style="left:575.90px;top:189.80px;width:7.40px;height:6.80px;background:linear-gradient(135deg,#dde6fd,#b9cdf8);border-radius:1px"></div>
<svg style="position:absolute;left:577.10px;top:191.40px" width="5" height="4"><path d="M0.5 3.2 L2.5 1.2 L4.5 3.2" stroke="#4d6185" stroke-width="1.2" fill="none"/></svg>
<div style="left:575.90px;top:431.70px;width:7.40px;height:8.10px;background:linear-gradient(135deg,#dde6fd,#b9cdf8);border-radius:1px"></div>
<svg style="position:absolute;left:577.10px;top:433.95px" width="5" height="4"><path d="M0.5 0.8 L2.5 2.8 L4.5 0.8" stroke="#4d6185" stroke-width="1.2" fill="none"/></svg>
<div style="left:50.40px;top:439.80px;width:534.20px;height:16.20px;background:#ece9d8"></div>
<div class="t" style="left:61.20px;top:443.80px;line-height:12.40px;font-size:6.2px;color:#000;transform:scaleX(0.888);transform-origin:0 50%;">Приходный кассовый ордер</div>
<div class="t" style="left:151.50px;top:443.80px;line-height:12.40px;font-size:6.2px;color:#000;transform:scaleX(0.888);transform-origin:0 50%;">Расходный кассовый ордер</div>
<div style="left:235.00px;top:446.00px;width:6.40px;height:6.40px;background:linear-gradient(135deg,#dcdcd7,#fff);border:0.9px solid #7d93b8;box-sizing:border-box"></div>
<div class="t" style="left:243.00px;top:443.80px;line-height:12.40px;font-size:6.2px;color:#000;transform:scaleX(0.888);transform-origin:0 50%;">Автоподбор курса</div>
<div style="left:583.60px;top:174.50px;width:1.20px;height:281.50px;background:#e8ecf8"></div>
<div style="left:0.00px;top:469.40px;width:640.00px;height:12.60px;background:#f4f3ee"></div>
<div style="left:1.20px;top:469.40px;width:637.80px;height:2.50px;background:#ffffff"></div>
<div style="left:2.00px;top:472.00px;width:546.00px;height:7.80px;background:#3c3c3c"></div>
<div style="left:551.00px;top:472.00px;width:57.60px;height:7.80px;background:#262626"></div>
<div class="t" style="left:551.80px;top:470.33px;line-height:12.54px;font-size:6.27px;color:#585858;transform:scaleX(0.842);transform-origin:0 50%;">01.06.2004-20.06.2004</div>
<div style="left:610.30px;top:472.00px;width:28.30px;height:7.80px;background:#f0eee4;box-shadow:inset 0.6px 0.6px #a0a090"></div>
<div class="t" style="left:424.50px;width:400px;text-align:center;top:470.99px;line-height:11.62px;font-size:5.81px;color:#202020;transform:scaleX(1.023);transform-origin:50% 50%;">13: 16: 27</div>
<div style="left:0.00px;top:479.80px;width:640.00px;height:2.20px;background:#d8d4c4"></div>
</div></body></html>
